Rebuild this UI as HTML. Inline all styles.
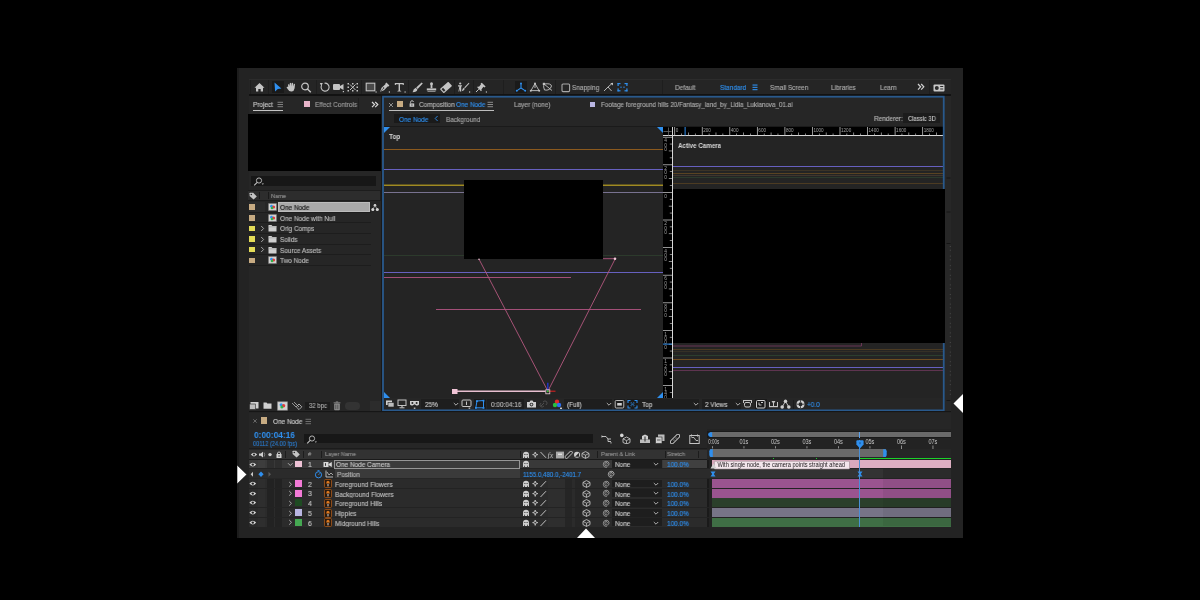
<!DOCTYPE html><html><head><meta charset="utf-8"><style>
html,body{margin:0;padding:0;background:#000;width:1200px;height:600px;overflow:hidden}
body>div,body>svg{position:absolute}
body>svg{will-change:transform}
.t{font-family:"Liberation Sans",sans-serif;white-space:nowrap;line-height:1;letter-spacing:0;-webkit-text-stroke:0.15px currentColor;transform:scaleX(0.92);transform-origin:0 0;will-change:transform}
</style></head><body>
<div style="left:237px;top:68px;width:726px;height:470px;background:#232323;"></div>
<div style="left:237px;top:68px;width:2px;height:470px;background:#1c1c1c;"></div>
<div style="left:249px;top:79px;width:702px;height:16px;background:#2c2c2c;"></div>
<div style="left:249px;top:80px;width:702px;height:14px;background:#252525;"></div>
<div style="left:249px;top:94px;width:702px;height:1.8px;background:#121212;"></div>
<div style="left:250px;top:80px;width:1px;height:14px;background:#1e1e1e;"></div>
<div style="left:268px;top:80px;width:1px;height:14px;background:#1e1e1e;"></div>
<div style="left:315.5px;top:80px;width:1px;height:14px;background:#1e1e1e;"></div>
<div style="left:361px;top:80px;width:1px;height:14px;background:#1e1e1e;"></div>
<div style="left:408px;top:80px;width:1px;height:14px;background:#1e1e1e;"></div>
<div style="left:454px;top:80px;width:1px;height:14px;background:#1e1e1e;"></div>
<div style="left:473px;top:80px;width:1px;height:14px;background:#1e1e1e;"></div>
<div style="left:503px;top:80px;width:1px;height:14px;background:#1e1e1e;"></div>
<div style="left:555px;top:80px;width:1px;height:14px;background:#1e1e1e;"></div>
<div style="left:662px;top:80px;width:1px;height:14px;background:#1e1e1e;"></div>
<div style="left:929px;top:80px;width:1px;height:14px;background:#1e1e1e;"></div>
<svg style="left:254px;top:82px;" width="11" height="10" viewBox="0 0 11 10"><path d="M5.5 1 L0.5 5.8 L2 5.8 L2 9.5 L4.3 9.5 L4.3 7 L6.7 7 L6.7 9.5 L9 9.5 L9 5.8 L10.5 5.8 Z" fill="#c4c4c4"/></svg>
<div style="left:272px;top:81px;width:11.6px;height:11.7px;background:#1a1a1a;"></div>
<svg style="left:273px;top:82px;" width="10" height="10" viewBox="0 0 10 10"><path d="M1.5 0.4 L8.4 6.6 L4.8 7 L2.1 9.6 Z" fill="#2f8fee"/></svg>
<svg style="left:286px;top:82px;" width="11" height="10" viewBox="0 0 11 10"><path d="M2.2 5 L2 2.6 Q2.6 1.8 3.3 2.6 L3.6 4.6 L3.8 1.2 Q4.5 0.4 5.2 1.2 L5.3 4.4 L5.8 1 Q6.5 0.3 7.1 1.2 L7 4.6 L7.8 2 Q8.5 1.5 9 2.3 L8.6 6.2 Q8.2 9 5.6 9.6 Q3 9.8 2 7.5 L0.6 5.4 Q0.8 4.4 1.7 4.8 Z" fill="#c4c4c4"/></svg>
<svg style="left:300px;top:82px;" width="12" height="11" viewBox="0 0 12 11"><circle cx="5" cy="4.5" r="3.3" fill="none" stroke="#c4c4c4" stroke-width="1.2"/><path d="M7.4 7 L10.8 10.2" stroke="#c4c4c4" stroke-width="1.4"/></svg>
<svg style="left:319px;top:82px;" width="12" height="11" viewBox="0 0 12 11"><path d="M2.6 3.2 A4 4 0 1 0 5.5 1.2" fill="none" stroke="#c4c4c4" stroke-width="1.1"/><path d="M0.8 1 L3.8 1 L2.3 4 Z" fill="#c4c4c4"/></svg>
<svg style="left:332px;top:82px;" width="13" height="11" viewBox="0 0 13 11"><rect x="1" y="2" width="7" height="6" rx="1" fill="#c4c4c4"/><path d="M8 4 L11.5 2 L11.5 8 L8 6Z" fill="#c4c4c4"/><rect x="10.8" y="9" width="1.2" height="1.2" fill="#c4c4c4"/></svg>
<svg style="left:347px;top:82px;" width="12" height="11" viewBox="0 0 12 11"><g fill="#c4c4c4"><rect x="0.5" y="1" width="1.5" height="1.5"/><rect x="9.5" y="1" width="1.5" height="1.5"/><rect x="0.5" y="8" width="1.5" height="1.5"/><rect x="9.5" y="8" width="1.5" height="1.5"/><rect x="0.5" y="4.5" width="1.5" height="1.5"/><rect x="9.5" y="4.5" width="1.5" height="1.5"/><rect x="5" y="1" width="1.5" height="1.5"/><rect x="5" y="8" width="1.5" height="1.5"/><path d="M3 2.5 L8.5 8 M8.5 2.5 L3 8" stroke="#c4c4c4" stroke-width="1"/></g></svg>
<svg style="left:365px;top:82px;" width="13" height="11" viewBox="0 0 13 11"><rect x="1.2" y="1.2" width="8.6" height="7.6" fill="#4a4a4a" stroke="#c4c4c4" stroke-width="1.1"/><rect x="10.5" y="9.4" width="1.2" height="1.2" fill="#c4c4c4"/></svg>
<svg style="left:379px;top:82px;" width="12" height="11" viewBox="0 0 12 11"><path d="M7.4 0.6 L10.4 3.6 L9.4 4.6 L8.6 4.4 L5 8.2 L1 9.8 L2.6 5.8 L6.4 2.2 L6.4 1.6 Z" fill="#c4c4c4"/><path d="M1.4 9.4 L4.4 6.4" stroke="#2a2a2a" stroke-width="0.7"/><circle cx="4.6" cy="6" r="0.7" fill="#2a2a2a"/><rect x="9.8" y="9.4" width="1.2" height="1.2" fill="#c4c4c4"/></svg>
<svg style="left:394px;top:82px;" width="12" height="11" viewBox="0 0 12 11"><path d="M0.8 1 L9.8 1 L9.8 3 L8.8 3 L8.6 2.2 L6 2.2 L6 8.5 L7.2 9 L7.2 9.6 L3.4 9.6 L3.4 9 L4.6 8.5 L4.6 2.2 L2 2.2 L1.8 3 L0.8 3 Z" fill="#c4c4c4"/><rect x="10.5" y="9.4" width="1.2" height="1.2" fill="#c4c4c4"/></svg>
<svg style="left:412px;top:82px;" width="11" height="11" viewBox="0 0 11 11"><path d="M9.6 0.4 L10.8 1.6 L5.6 7 L4.2 5.6 Z" fill="#c4c4c4"/><path d="M3.8 5.8 L5.4 7.4 Q5 10 0.6 10.2 Q1.4 6.6 3.8 5.8Z" fill="#c4c4c4"/></svg>
<svg style="left:426px;top:82px;" width="11" height="11" viewBox="0 0 11 11"><circle cx="5.5" cy="1.8" r="1.5" fill="#c4c4c4"/><rect x="4.6" y="2.8" width="1.8" height="3.5" fill="#c4c4c4"/><path d="M0.8 6.4 L10.2 6.4 L10.2 8.4 L0.8 8.4Z" fill="#c4c4c4"/><rect x="1.5" y="9" width="8" height="1" fill="#8a8a8a"/></svg>
<svg style="left:440px;top:82px;" width="12" height="11" viewBox="0 0 12 11"><g transform="rotate(-42 6 5.5)"><rect x="0.4" y="2.6" width="11.2" height="5.8" rx="0.8" fill="#c4c4c4"/><rect x="1.6" y="3.8" width="2" height="3.4" fill="#2a2a2a"/></g></svg>
<svg style="left:457px;top:82px;" width="14" height="11" viewBox="0 0 14 11"><circle cx="3.2" cy="1.5" r="1.1" fill="#c4c4c4"/><path d="M1 3.3 L5.2 3.3 L4.2 5 L4.2 9.6 L3 9.6 L3 6.5 L2.2 9.6 L1.4 9.6 L2.4 4.6 L1 4.6Z" fill="#c4c4c4"/><path d="M11.8 0.8 L12.4 1.4 L8 6.2 L7.2 5.4 Z" fill="#c4c4c4"/><path d="M6.8 5.8 L7.8 6.8 Q7.4 8.8 4.8 9.2 Q5.4 6.6 6.8 5.8Z" fill="#c4c4c4"/><rect x="12" y="9.4" width="1.2" height="1.2" fill="#c4c4c4"/></svg>
<svg style="left:475px;top:82px;" width="13" height="11" viewBox="0 0 13 11"><path d="M6.8 0.8 L10.6 4.6 L9.6 5.4 L8.4 4.8 L6.4 7.4 L6.8 8.6 L6 9.2 L2.2 5.2 L2.8 4.4 L4 4.8 L6 2.2 L5.6 1.4Z" fill="#c4c4c4"/><path d="M3.8 7.2 L1 10" stroke="#c4c4c4" stroke-width="1"/><rect x="10.8" y="9.4" width="1.2" height="1.2" fill="#c4c4c4"/></svg>
<div style="left:515px;top:81px;width:11.5px;height:12px;background:#1a1a1a;"></div>
<svg style="left:515px;top:82px;" width="12" height="11" viewBox="0 0 12 11"><path d="M6 1.5 L6 6 L2 8.6 M6 6 L10 8.6" stroke="#2f8fee" stroke-width="1.1" fill="none"/><circle cx="6" cy="1.6" r="1" fill="#2f8fee"/><circle cx="1.8" cy="8.7" r="1" fill="#2f8fee"/><circle cx="10.2" cy="8.7" r="1" fill="#2f8fee"/></svg>
<svg style="left:529px;top:82px;" width="12" height="11" viewBox="0 0 12 11"><path d="M6 1.5 L2 8.6 L10 8.6 Z M6 1.5 L6 6" stroke="#c4c4c4" stroke-width="0.9" fill="none"/><circle cx="6" cy="1.6" r="1" fill="#c4c4c4"/><circle cx="1.8" cy="8.7" r="1" fill="#c4c4c4"/><circle cx="10.2" cy="8.7" r="1" fill="#c4c4c4"/></svg>
<svg style="left:542px;top:82px;" width="12" height="11" viewBox="0 0 12 11"><path d="M2 2 L10 8.5 M2 2 Q9 1 9.5 4 Q8 9 2.5 8 Q1 5 2 2" stroke="#c4c4c4" stroke-width="0.9" fill="none"/><rect x="0.8" y="0.8" width="2.2" height="2.2" fill="#c4c4c4"/></svg>
<svg style="left:561px;top:83px;" width="10" height="10" viewBox="0 0 10 10"><rect x="1" y="1" width="7.6" height="7.6" rx="1" fill="none" stroke="#a8a8a8" stroke-width="1.1"/></svg>
<div class="t" style="left:572px;top:84px;font-size:7px;color:#a9a9a9;">Snapping</div>
<svg style="left:603px;top:82px;" width="11" height="11" viewBox="0 0 11 11"><path d="M1 9 L5 5 L8.6 9 M5 5 L9.4 1.2" stroke="#c4c4c4" stroke-width="0.9" fill="none"/><path d="M7.2 1 L10 1 L10 3.6Z" fill="#c4c4c4"/></svg>
<svg style="left:617px;top:82px;" width="11" height="11" viewBox="0 0 11 11"><g fill="#2f8fee"><rect x="0.5" y="1" width="3" height="1.2"/><rect x="0.5" y="1" width="1.2" height="3"/><rect x="7.5" y="1" width="3" height="1.2"/><rect x="9.3" y="1" width="1.2" height="3"/><rect x="0.5" y="8.2" width="3" height="1.2"/><rect x="0.5" y="6.4" width="1.2" height="3"/><rect x="7.5" y="8.2" width="3" height="1.2"/><rect x="9.3" y="6.4" width="1.2" height="3"/><rect x="3.4" y="4.6" width="1.2" height="1.2"/><rect x="6.4" y="4.6" width="1.2" height="1.2"/></g></svg>
<div class="t" style="left:675px;top:84px;font-size:7px;color:#a9a9a9;">Default</div>
<div class="t" style="left:720px;top:84px;font-size:7px;color:#2f8fee;">Standard</div>
<svg style="left:752px;top:84px;" width="6" height="7" viewBox="0 0 6 7"><g fill="#2f8fee"><rect x="0.5" y="0.5" width="5" height="1.1"/><rect x="0.5" y="2.8" width="5" height="1.1"/><rect x="0.5" y="5.1" width="5" height="1.1"/></g></svg>
<div class="t" style="left:770px;top:84px;font-size:7px;color:#a9a9a9;">Small Screen</div>
<div class="t" style="left:831px;top:84px;font-size:7px;color:#a9a9a9;">Libraries</div>
<div class="t" style="left:880px;top:84px;font-size:7px;color:#a9a9a9;">Learn</div>
<svg style="left:917px;top:83px;" width="8" height="8" viewBox="0 0 8 8"><path d="M1 1 L3.6 3.8 L1 6.6 M4.2 1 L6.8 3.8 L4.2 6.6" stroke="#d0d0d0" stroke-width="1.2" fill="none"/></svg>
<svg style="left:933px;top:84px;" width="12" height="8" viewBox="0 0 12 8"><rect x="0.5" y="0.5" width="11" height="7" rx="1" fill="#c8c8c8"/><circle cx="3.8" cy="4" r="2" fill="#2a2a2a"/><rect x="7.2" y="2" width="3" height="1" fill="#2a2a2a"/><rect x="7.2" y="4.5" width="3" height="1" fill="#2a2a2a"/></svg>
<div style="left:249px;top:96px;width:132px;height:316px;background:#262626;"></div>
<div style="left:380.5px;top:96px;width:1.5px;height:316px;background:#181818;"></div>
<div class="t" style="left:252.5px;top:101px;font-size:7px;color:#c9c9c9;">Project</div>
<svg style="left:277px;top:101px;" width="7" height="7" viewBox="0 0 7 7"><g fill="#808080"><rect x="0.5" y="0.8" width="5.5" height="1"/><rect x="0.5" y="3" width="5.5" height="1"/><rect x="0.5" y="5.2" width="5.5" height="1"/></g></svg>
<div style="left:252.5px;top:110px;width:30.5px;height:1.1px;background:#c4c4c4;"></div>
<div style="left:303.8px;top:101.4px;width:6px;height:5.8px;background:#e6b3c8;"></div>
<div class="t" style="left:315px;top:101px;font-size:7px;color:#9c9c9c;">Effect Controls</div>
<div style="left:358px;top:98px;width:1px;height:12px;background:#1e1e1e;"></div>
<svg style="left:371px;top:101px;" width="8" height="8" viewBox="0 0 8 8"><path d="M1 1 L3.6 3.6 L1 6.2 M4.2 1 L6.8 3.6 L4.2 6.2" stroke="#d8d8d8" stroke-width="1.2" fill="none"/></svg>
<div style="left:247.5px;top:114px;width:133px;height:57px;background:#000;"></div>
<div style="left:251px;top:176px;width:125px;height:10px;background:#171717;"></div>
<svg style="left:253px;top:177px;" width="12" height="9" viewBox="0 0 12 9"><circle cx="6" cy="3.5" r="2.6" fill="none" stroke="#c4c4c4" stroke-width="0.9"/><path d="M4.2 5.4 L1.2 8.4" stroke="#c4c4c4" stroke-width="1.1"/><path d="M8.6 6.4 L11 6.4 L9.8 7.8Z" fill="#c4c4c4"/></svg>
<div style="left:247.5px;top:190px;width:133px;height:11px;background:#1d1d1d;"></div>
<div style="left:248px;top:191.3px;width:132px;height:9px;background:#2d2d2d;"></div>
<svg style="left:249px;top:192px;" width="9" height="8" viewBox="0 0 9 8"><path d="M0.6 1.2 L0.6 4 L4.6 7.6 L7.8 4.4 L4.2 0.8 L1 0.8Z" fill="#c4c4c4"/><circle cx="2.3" cy="2.5" r="0.8" fill="#282828"/></svg>
<div style="left:258.5px;top:192px;width:0.8px;height:7px;background:#1a1a1a;"></div>
<div style="left:267.5px;top:192px;width:0.8px;height:7px;background:#1a1a1a;"></div>
<div class="t" style="left:271px;top:193px;font-size:6.2px;color:#8e8e8e;">Name</div>
<div style="left:249px;top:201.6px;width:16px;height:10.4px;background:#2b2b2b;"></div>
<div style="left:249px;top:211.79999999999998px;width:122px;height:0.8px;background:#1d1d1d;"></div>
<div style="left:249.2px;top:204.29999999999998px;width:5.6px;height:5.6px;background:#c7ab82;"></div>
<svg style="left:267.5px;top:202.9px;" width="9" height="8" viewBox="0 0 9 8"><rect x="0.3" y="0.3" width="8.4" height="7.4" fill="#9c9c9c"/><rect x="1" y="1" width="7" height="6" fill="#d2d2d2"/><circle cx="3.5" cy="3.2" r="1.4" fill="#2f8fee"/><circle cx="5.6" cy="4.1" r="1.5" fill="#e03b3b"/><circle cx="4" cy="5" r="1.3" fill="#33b24a"/></svg>
<div style="left:278px;top:201.9px;width:92px;height:10px;background:#a9a9a9;box-sizing:border-box;border:1px solid #bcbcbc;"></div>
<div class="t" style="left:279.5px;top:204px;font-size:7px;color:#161616;">One Node</div>
<svg style="left:371px;top:202.6px;" width="9" height="9" viewBox="0 0 9 9"><g fill="#dcdcdc"><circle cx="4" cy="2.2" r="1.3"/><circle cx="1.8" cy="6.6" r="1.5"/><circle cx="6.3" cy="6.6" r="1.5"/></g><path d="M4 2.2 L1.8 6.6 M4 2.2 L6.3 6.6" stroke="#bdbdbd" stroke-width="0.7"/></svg>
<div style="left:249px;top:222.45px;width:122px;height:0.8px;background:#1d1d1d;"></div>
<div style="left:249.2px;top:214.95px;width:5.6px;height:5.6px;background:#c7ab82;"></div>
<svg style="left:267.5px;top:213.55px;" width="9" height="8" viewBox="0 0 9 8"><rect x="0.3" y="0.3" width="8.4" height="7.4" fill="#9c9c9c"/><rect x="1" y="1" width="7" height="6" fill="#d2d2d2"/><circle cx="3.5" cy="3.2" r="1.4" fill="#2f8fee"/><circle cx="5.6" cy="4.1" r="1.5" fill="#e03b3b"/><circle cx="4" cy="5" r="1.3" fill="#33b24a"/></svg>
<div class="t" style="left:279.5px;top:215px;font-size:7px;color:#bababa;">One Node with Null</div>
<div style="left:249px;top:233.1px;width:122px;height:0.8px;background:#1d1d1d;"></div>
<div style="left:249.2px;top:225.6px;width:5.6px;height:5.6px;background:#e4dc58;"></div>
<svg style="left:260px;top:224.9px;" width="5" height="7" viewBox="0 0 5 7"><path d="M1.2 1 L3.6 3.5 L1.2 6" stroke="#b0b0b0" stroke-width="0.9" fill="none"/></svg>
<svg style="left:267.5px;top:224.20000000000002px;" width="9" height="8" viewBox="0 0 9 8"><path d="M0.5 1 L3.5 1 L4.4 2 L8.5 2 L8.5 7.5 L0.5 7.5Z" fill="#cfcfcf"/><rect x="0.5" y="2.6" width="8" height="0.6" fill="#9a9a9a"/></svg>
<div class="t" style="left:279.5px;top:225px;font-size:7px;color:#bababa;">Orig Comps</div>
<div style="left:249px;top:243.75px;width:122px;height:0.8px;background:#1d1d1d;"></div>
<div style="left:249.2px;top:236.25px;width:5.6px;height:5.6px;background:#e4dc58;"></div>
<svg style="left:260px;top:235.55px;" width="5" height="7" viewBox="0 0 5 7"><path d="M1.2 1 L3.6 3.5 L1.2 6" stroke="#b0b0b0" stroke-width="0.9" fill="none"/></svg>
<svg style="left:267.5px;top:234.85000000000002px;" width="9" height="8" viewBox="0 0 9 8"><path d="M0.5 1 L3.5 1 L4.4 2 L8.5 2 L8.5 7.5 L0.5 7.5Z" fill="#cfcfcf"/><rect x="0.5" y="2.6" width="8" height="0.6" fill="#9a9a9a"/></svg>
<div class="t" style="left:279.5px;top:236px;font-size:7px;color:#bababa;">Solids</div>
<div style="left:249px;top:254.39999999999998px;width:122px;height:0.8px;background:#1d1d1d;"></div>
<div style="left:249.2px;top:246.89999999999998px;width:5.6px;height:5.6px;background:#e4dc58;"></div>
<svg style="left:260px;top:246.2px;" width="5" height="7" viewBox="0 0 5 7"><path d="M1.2 1 L3.6 3.5 L1.2 6" stroke="#b0b0b0" stroke-width="0.9" fill="none"/></svg>
<svg style="left:267.5px;top:245.5px;" width="9" height="8" viewBox="0 0 9 8"><path d="M0.5 1 L3.5 1 L4.4 2 L8.5 2 L8.5 7.5 L0.5 7.5Z" fill="#cfcfcf"/><rect x="0.5" y="2.6" width="8" height="0.6" fill="#9a9a9a"/></svg>
<div class="t" style="left:279.5px;top:247px;font-size:7px;color:#bababa;">Source Assets</div>
<div style="left:249px;top:265.05px;width:122px;height:0.8px;background:#1d1d1d;"></div>
<div style="left:249.2px;top:257.55px;width:5.6px;height:5.6px;background:#c7ab82;"></div>
<svg style="left:267.5px;top:256.15px;" width="9" height="8" viewBox="0 0 9 8"><rect x="0.3" y="0.3" width="8.4" height="7.4" fill="#9c9c9c"/><rect x="1" y="1" width="7" height="6" fill="#d2d2d2"/><circle cx="3.5" cy="3.2" r="1.4" fill="#2f8fee"/><circle cx="5.6" cy="4.1" r="1.5" fill="#e03b3b"/><circle cx="4" cy="5" r="1.3" fill="#33b24a"/></svg>
<div class="t" style="left:279.5px;top:257px;font-size:7px;color:#bababa;">Two Node</div>
<div style="left:249px;top:400px;width:132px;height:11.3px;background:#262626;"></div>
<div style="left:249px;top:411.3px;width:132px;height:1px;background:#161616;"></div>
<svg style="left:249px;top:401px;" width="11" height="10" viewBox="0 0 11 10"><rect x="1.5" y="1" width="8" height="6.5" fill="#d0d0d0"/><rect x="0.5" y="3" width="6" height="5.5" fill="#bdbdbd" stroke="#262626" stroke-width="0.6"/></svg>
<svg style="left:263px;top:401px;" width="9" height="9" viewBox="0 0 9 9"><path d="M0.5 1.5 L3.5 1.5 L4.3 2.4 L8.5 2.4 L8.5 7.8 L0.5 7.8Z" fill="#d0d0d0"/></svg>
<svg style="left:276.5px;top:401px;" width="11" height="10" viewBox="0 0 11 10"><rect x="0.3" y="0.5" width="10.4" height="9" fill="#a8a8a8"/><rect x="1" y="1.2" width="9" height="7.6" fill="#d2d2d2"/><circle cx="4.2" cy="3.8" r="1.6" fill="#2f8fee"/><circle cx="6.6" cy="4.8" r="1.7" fill="#e03b3b"/><circle cx="4.8" cy="6" r="1.5" fill="#33b24a"/></svg>
<svg style="left:291px;top:401px;" width="12" height="10" viewBox="0 0 12 10"><path d="M1 2 L5 6 M3 1 L8 6" stroke="#a0a0a0" stroke-width="0.9"/><path d="M8 3 L10.8 5.8 L8 8.6 L5.2 5.8Z" fill="none" stroke="#b8b8b8" stroke-width="0.9"/></svg>
<div style="left:305px;top:401.5px;width:24.5px;height:8.5px;background:#1c1c1c;"></div>
<div class="t" style="left:309px;top:403px;font-size:6.5px;color:#a9a9a9;">32 bpc</div>
<svg style="left:332.5px;top:401px;" width="8" height="10" viewBox="0 0 8 10"><rect x="1.2" y="2.6" width="5.6" height="6.6" rx="0.8" fill="#8e8e8e"/><rect x="0.6" y="1.4" width="6.8" height="0.9" fill="#8e8e8e"/><rect x="2.8" y="0.5" width="2.4" height="0.9" fill="#8e8e8e"/><rect x="2.6" y="3.6" width="0.6" height="4.6" fill="#262626"/><rect x="4.6" y="3.6" width="0.6" height="4.6" fill="#262626"/></svg>
<div style="left:344.5px;top:401.5px;width:15px;height:8.5px;background:#333333;border-radius:4px;"></div>
<div style="left:369.5px;top:400.5px;width:11px;height:10.5px;background:#2c2c2c;"></div>
<div style="left:382px;top:96px;width:562px;height:315px;background:#262626;"></div>
<svg style="left:388px;top:102px;" width="6" height="6" viewBox="0 0 6 6"><path d="M1 1 L5 5 M5 1 L1 5" stroke="#9a9a9a" stroke-width="0.9"/></svg>
<div style="left:397px;top:101px;width:6.3px;height:6.3px;background:#c7ab82;"></div>
<svg style="left:408.5px;top:100px;" width="6" height="8" viewBox="0 0 6 8"><path d="M1.6 3.4 L1.6 2.2 Q1.6 0.7 3 0.7 Q4.4 0.7 4.4 2" stroke="#c8c8c8" stroke-width="0.9" fill="none"/><rect x="0.6" y="3.4" width="4.6" height="3.4" fill="#c8c8c8"/><rect x="2.5" y="4.4" width="0.9" height="1.3" fill="#262626"/></svg>
<div class="t" style="left:419px;top:101px;font-size:7px;color:#b2b2b2;">Composition</div>
<div class="t" style="left:456px;top:101px;font-size:7px;color:#2f8fee;">One Node</div>
<svg style="left:487px;top:101px;" width="7" height="7" viewBox="0 0 7 7"><g fill="#8a8a8a"><rect x="0.5" y="0.8" width="5.5" height="1"/><rect x="0.5" y="3" width="5.5" height="1"/><rect x="0.5" y="5.2" width="5.5" height="1"/></g></svg>
<div style="left:389px;top:110.3px;width:105px;height:1.1px;background:#bdbdbd;"></div>
<div class="t" style="left:514px;top:101px;font-size:7px;color:#a6a6a6;">Layer (none)</div>
<div style="left:589.5px;top:101.5px;width:5.8px;height:5.8px;background:#b9b6e2;"></div>
<div class="t" style="left:601px;top:101px;font-size:7px;color:#aaaaaa;transform:scaleX(0.895)">Footage foreground hills 20/Fantasy_land_by_Lidia_Lukianova_01.ai</div>
<div style="left:394px;top:113.5px;width:45.5px;height:9.5px;background:#1a1a1a;"></div>
<div class="t" style="left:399px;top:116px;font-size:7px;color:#2f8fee;">One Node</div>
<svg style="left:434px;top:115px;" width="5" height="7" viewBox="0 0 5 7"><path d="M3.6 1 L1.2 3.5 L3.6 6" stroke="#2f8fee" stroke-width="0.9" fill="none"/></svg>
<div class="t" style="left:446px;top:116px;font-size:7px;color:#a3a3a3;">Background</div>
<div class="t" style="left:874px;top:115px;font-size:7px;color:#b8b8b8;">Renderer:</div>
<div style="left:903px;top:113.4px;width:37px;height:9.6px;background:#1c1c1c;"></div>
<div class="t" style="left:908px;top:115px;font-size:7px;color:#c2c2c2;transform:scaleX(0.83)">Classic 3D</div>
<div style="left:384px;top:126.2px;width:560px;height:1px;background:#1a1a1a;"></div>
<div style="left:384px;top:127px;width:279px;height:271px;background:#242424;"></div>
<div style="left:384px;top:149.2px;width:279px;height:1px;background:#8c5a1e;"></div>
<div style="left:384px;top:169.2px;width:279px;height:1.2px;background:#6660bf;"></div>
<div style="left:384px;top:184px;width:279px;height:1px;background:#5e5420;"></div>
<div style="left:384px;top:185px;width:279px;height:1px;background:#a08a22;"></div>
<div style="left:384px;top:191.8px;width:279px;height:1px;background:#787290;"></div>
<div style="left:384px;top:255px;width:279px;height:0.8px;background:#2c3a2c;"></div>
<div style="left:384px;top:272px;width:279px;height:1.2px;background:#6660bf;"></div>
<div style="left:384px;top:277px;width:187px;height:1px;background:#a34f78;"></div>
<div style="left:435.5px;top:309px;width:205.5px;height:1px;background:#a34f78;"></div>
<div style="left:464px;top:179.5px;width:139px;height:79.2px;background:#000;"></div>
<svg style="left:384px;top:127px;" width="279" height="271" viewBox="0 0 279 271"><path d="M95 132.2 L163.9 264.2 L231.1 132" stroke="#b4587f" stroke-width="0.9" fill="none"/><path d="M219 131.7 L231 131.7" stroke="#a35277" stroke-width="1"/><circle cx="231" cy="131.7" r="1.3" fill="#f0c8d8"/><circle cx="95" cy="132.2" r="0.8" fill="#e8c0d0"/><path d="M73 264.3 L161.5 264.3" stroke="#e8bfd0" stroke-width="1.6"/><rect x="68" y="262" width="5.5" height="5" fill="#f0c4d6"/><path d="M163.8 264.2 L163.8 255.8" stroke="#2233cc" stroke-width="1.4"/><path d="M163.8 264.2 L171.5 264.2" stroke="#d02020" stroke-width="1.1"/><rect x="161.8" y="262.8" width="4" height="4" fill="none" stroke="#e8d0d8" stroke-width="0.8"/><circle cx="163.8" cy="264.2" r="1" fill="#30c030"/></svg>
<svg style="left:384px;top:127px;" width="6" height="6" viewBox="0 0 6 6"><polygon points="0,0 6,0 0,6" fill="#2f8fee"/></svg>
<svg style="left:657px;top:127px;" width="6" height="6" viewBox="0 0 6 6"><polygon points="0,0 6,0 6,6" fill="#2f8fee"/></svg>
<svg style="left:384px;top:392px;" width="6" height="6" viewBox="0 0 6 6"><polygon points="0,0 6,6 0,6" fill="#2f8fee"/></svg>
<svg style="left:657px;top:392px;" width="6" height="6" viewBox="0 0 6 6"><polygon points="6,0 6,6 0,6" fill="#2f8fee"/></svg>
<div class="t" style="left:389.3px;top:133px;font-size:7px;color:#d8d8d8;font-weight:bold;-webkit-text-stroke:0">Top</div>
<div style="left:663px;top:127px;width:281px;height:8.5px;background:#000;"></div>
<div style="left:663px;top:127px;width:9.5px;height:271px;background:#000;"></div>
<div style="left:663px;top:135px;width:281px;height:1.2px;background:#d8d8d8;"></div>
<div style="left:672px;top:127px;width:1.2px;height:271px;background:#d8d8d8;"></div>
<svg style="left:673px;top:127px;" width="271" height="9" viewBox="0 0 271 9"><rect x="1.30" y="0" width="0.8" height="8.5" fill="#bdbdbd"/><text x="2.70" y="4.7" font-size="4.6" fill="#a0a0a0" font-family="Liberation Sans">0</text><rect x="8.19" y="6.5" width="0.7" height="2" fill="#bdbdbd"/><rect x="15.07" y="5.5" width="0.7" height="3" fill="#bdbdbd"/><rect x="21.96" y="6.5" width="0.7" height="2" fill="#bdbdbd"/><rect x="28.85" y="0" width="0.8" height="8.5" fill="#bdbdbd"/><text x="30.25" y="4.7" font-size="4.6" fill="#a0a0a0" font-family="Liberation Sans">200</text><rect x="35.74" y="6.5" width="0.7" height="2" fill="#bdbdbd"/><rect x="42.62" y="5.5" width="0.7" height="3" fill="#bdbdbd"/><rect x="49.51" y="6.5" width="0.7" height="2" fill="#bdbdbd"/><rect x="56.40" y="0" width="0.8" height="8.5" fill="#bdbdbd"/><text x="57.80" y="4.7" font-size="4.6" fill="#a0a0a0" font-family="Liberation Sans">400</text><rect x="63.29" y="6.5" width="0.7" height="2" fill="#bdbdbd"/><rect x="70.17" y="5.5" width="0.7" height="3" fill="#bdbdbd"/><rect x="77.06" y="6.5" width="0.7" height="2" fill="#bdbdbd"/><rect x="83.95" y="0" width="0.8" height="8.5" fill="#bdbdbd"/><text x="85.35" y="4.7" font-size="4.6" fill="#a0a0a0" font-family="Liberation Sans">600</text><rect x="90.84" y="6.5" width="0.7" height="2" fill="#bdbdbd"/><rect x="97.72" y="5.5" width="0.7" height="3" fill="#bdbdbd"/><rect x="104.61" y="6.5" width="0.7" height="2" fill="#bdbdbd"/><rect x="111.50" y="0" width="0.8" height="8.5" fill="#bdbdbd"/><text x="112.90" y="4.7" font-size="4.6" fill="#a0a0a0" font-family="Liberation Sans">800</text><rect x="118.39" y="6.5" width="0.7" height="2" fill="#bdbdbd"/><rect x="125.27" y="5.5" width="0.7" height="3" fill="#bdbdbd"/><rect x="132.16" y="6.5" width="0.7" height="2" fill="#bdbdbd"/><rect x="139.05" y="0" width="0.8" height="8.5" fill="#bdbdbd"/><text x="140.45" y="4.7" font-size="4.6" fill="#a0a0a0" font-family="Liberation Sans">1000</text><rect x="145.94" y="6.5" width="0.7" height="2" fill="#bdbdbd"/><rect x="152.82" y="5.5" width="0.7" height="3" fill="#bdbdbd"/><rect x="159.71" y="6.5" width="0.7" height="2" fill="#bdbdbd"/><rect x="166.60" y="0" width="0.8" height="8.5" fill="#bdbdbd"/><text x="168.00" y="4.7" font-size="4.6" fill="#a0a0a0" font-family="Liberation Sans">1200</text><rect x="173.49" y="6.5" width="0.7" height="2" fill="#bdbdbd"/><rect x="180.37" y="5.5" width="0.7" height="3" fill="#bdbdbd"/><rect x="187.26" y="6.5" width="0.7" height="2" fill="#bdbdbd"/><rect x="194.15" y="0" width="0.8" height="8.5" fill="#bdbdbd"/><text x="195.55" y="4.7" font-size="4.6" fill="#a0a0a0" font-family="Liberation Sans">1400</text><rect x="201.04" y="6.5" width="0.7" height="2" fill="#bdbdbd"/><rect x="207.92" y="5.5" width="0.7" height="3" fill="#bdbdbd"/><rect x="214.81" y="6.5" width="0.7" height="2" fill="#bdbdbd"/><rect x="221.70" y="0" width="0.8" height="8.5" fill="#bdbdbd"/><text x="223.10" y="4.7" font-size="4.6" fill="#a0a0a0" font-family="Liberation Sans">1600</text><rect x="228.59" y="6.5" width="0.7" height="2" fill="#bdbdbd"/><rect x="235.47" y="5.5" width="0.7" height="3" fill="#bdbdbd"/><rect x="242.36" y="6.5" width="0.7" height="2" fill="#bdbdbd"/><rect x="249.25" y="0" width="0.8" height="8.5" fill="#bdbdbd"/><text x="250.65" y="4.7" font-size="4.6" fill="#a0a0a0" font-family="Liberation Sans">1800</text><rect x="256.14" y="6.5" width="0.7" height="2" fill="#bdbdbd"/><rect x="263.02" y="5.5" width="0.7" height="3" fill="#bdbdbd"/><rect x="269.91" y="6.5" width="0.7" height="2" fill="#bdbdbd"/><rect x="11.6" y="0" width="1" height="8.5" fill="#2f8fee"/></svg>
<svg style="left:663px;top:127px;" width="9" height="9" viewBox="0 0 9 9"><rect x="0.5" y="4.2" width="8" height="0.8" fill="#6a6a6a"/><rect x="5.2" y="0.5" width="0.8" height="8" fill="#6a6a6a"/></svg>
<svg style="left:663px;top:136px;" width="9" height="262" viewBox="0 0 9 262"><rect x="0" y="0.80" width="9" height="0.8" fill="#bdbdbd"/><text x="1.3" y="6.40" font-size="4.8" fill="#a0a0a0" font-family="Liberation Sans">4</text><text x="1.3" y="10.70" font-size="4.8" fill="#a0a0a0" font-family="Liberation Sans">0</text><text x="1.3" y="15.00" font-size="4.8" fill="#a0a0a0" font-family="Liberation Sans">0</text><rect x="6.8" y="7.70" width="2.2" height="0.7" fill="#bdbdbd"/><rect x="5.8" y="14.60" width="3.2" height="0.7" fill="#bdbdbd"/><rect x="6.8" y="21.50" width="2.2" height="0.7" fill="#bdbdbd"/><rect x="0" y="28.40" width="9" height="0.8" fill="#bdbdbd"/><text x="1.3" y="34.00" font-size="4.8" fill="#a0a0a0" font-family="Liberation Sans">2</text><text x="1.3" y="38.30" font-size="4.8" fill="#a0a0a0" font-family="Liberation Sans">0</text><text x="1.3" y="42.60" font-size="4.8" fill="#a0a0a0" font-family="Liberation Sans">0</text><rect x="6.8" y="35.30" width="2.2" height="0.7" fill="#bdbdbd"/><rect x="5.8" y="42.20" width="3.2" height="0.7" fill="#bdbdbd"/><rect x="6.8" y="49.10" width="2.2" height="0.7" fill="#bdbdbd"/><rect x="0" y="56.00" width="9" height="0.8" fill="#bdbdbd"/><text x="1.3" y="61.60" font-size="4.8" fill="#a0a0a0" font-family="Liberation Sans">0</text><rect x="6.8" y="62.90" width="2.2" height="0.7" fill="#bdbdbd"/><rect x="5.8" y="69.80" width="3.2" height="0.7" fill="#bdbdbd"/><rect x="6.8" y="76.70" width="2.2" height="0.7" fill="#bdbdbd"/><rect x="0" y="83.60" width="9" height="0.8" fill="#bdbdbd"/><text x="1.3" y="89.20" font-size="4.8" fill="#a0a0a0" font-family="Liberation Sans">2</text><text x="1.3" y="93.50" font-size="4.8" fill="#a0a0a0" font-family="Liberation Sans">0</text><text x="1.3" y="97.80" font-size="4.8" fill="#a0a0a0" font-family="Liberation Sans">0</text><rect x="6.8" y="90.50" width="2.2" height="0.7" fill="#bdbdbd"/><rect x="5.8" y="97.40" width="3.2" height="0.7" fill="#bdbdbd"/><rect x="6.8" y="104.30" width="2.2" height="0.7" fill="#bdbdbd"/><rect x="0" y="111.20" width="9" height="0.8" fill="#bdbdbd"/><text x="1.3" y="116.80" font-size="4.8" fill="#a0a0a0" font-family="Liberation Sans">4</text><text x="1.3" y="121.10" font-size="4.8" fill="#a0a0a0" font-family="Liberation Sans">0</text><text x="1.3" y="125.40" font-size="4.8" fill="#a0a0a0" font-family="Liberation Sans">0</text><rect x="6.8" y="118.10" width="2.2" height="0.7" fill="#bdbdbd"/><rect x="5.8" y="125.00" width="3.2" height="0.7" fill="#bdbdbd"/><rect x="6.8" y="131.90" width="2.2" height="0.7" fill="#bdbdbd"/><rect x="0" y="138.80" width="9" height="0.8" fill="#bdbdbd"/><text x="1.3" y="144.40" font-size="4.8" fill="#a0a0a0" font-family="Liberation Sans">6</text><text x="1.3" y="148.70" font-size="4.8" fill="#a0a0a0" font-family="Liberation Sans">0</text><text x="1.3" y="153.00" font-size="4.8" fill="#a0a0a0" font-family="Liberation Sans">0</text><rect x="6.8" y="145.70" width="2.2" height="0.7" fill="#bdbdbd"/><rect x="5.8" y="152.60" width="3.2" height="0.7" fill="#bdbdbd"/><rect x="6.8" y="159.50" width="2.2" height="0.7" fill="#bdbdbd"/><rect x="0" y="166.40" width="9" height="0.8" fill="#bdbdbd"/><text x="1.3" y="172.00" font-size="4.8" fill="#a0a0a0" font-family="Liberation Sans">8</text><text x="1.3" y="176.30" font-size="4.8" fill="#a0a0a0" font-family="Liberation Sans">0</text><text x="1.3" y="180.60" font-size="4.8" fill="#a0a0a0" font-family="Liberation Sans">0</text><rect x="6.8" y="173.30" width="2.2" height="0.7" fill="#bdbdbd"/><rect x="5.8" y="180.20" width="3.2" height="0.7" fill="#bdbdbd"/><rect x="6.8" y="187.10" width="2.2" height="0.7" fill="#bdbdbd"/><rect x="0" y="194.00" width="9" height="0.8" fill="#bdbdbd"/><text x="1.3" y="199.60" font-size="4.8" fill="#a0a0a0" font-family="Liberation Sans">1</text><text x="1.3" y="203.90" font-size="4.8" fill="#a0a0a0" font-family="Liberation Sans">0</text><text x="1.3" y="208.20" font-size="4.8" fill="#a0a0a0" font-family="Liberation Sans">0</text><text x="1.3" y="212.50" font-size="4.8" fill="#a0a0a0" font-family="Liberation Sans">0</text><rect x="6.8" y="200.90" width="2.2" height="0.7" fill="#bdbdbd"/><rect x="5.8" y="207.80" width="3.2" height="0.7" fill="#bdbdbd"/><rect x="6.8" y="214.70" width="2.2" height="0.7" fill="#bdbdbd"/><rect x="0" y="221.60" width="9" height="0.8" fill="#bdbdbd"/><text x="1.3" y="227.20" font-size="4.8" fill="#a0a0a0" font-family="Liberation Sans">1</text><text x="1.3" y="231.50" font-size="4.8" fill="#a0a0a0" font-family="Liberation Sans">2</text><text x="1.3" y="235.80" font-size="4.8" fill="#a0a0a0" font-family="Liberation Sans">0</text><text x="1.3" y="240.10" font-size="4.8" fill="#a0a0a0" font-family="Liberation Sans">0</text><rect x="6.8" y="228.50" width="2.2" height="0.7" fill="#bdbdbd"/><rect x="5.8" y="235.40" width="3.2" height="0.7" fill="#bdbdbd"/><rect x="6.8" y="242.30" width="2.2" height="0.7" fill="#bdbdbd"/><rect x="0" y="249.20" width="9" height="0.8" fill="#bdbdbd"/><text x="1.3" y="254.80" font-size="4.8" fill="#a0a0a0" font-family="Liberation Sans">1</text><text x="1.3" y="259.10" font-size="4.8" fill="#a0a0a0" font-family="Liberation Sans">4</text><text x="1.3" y="263.40" font-size="4.8" fill="#a0a0a0" font-family="Liberation Sans">0</text><text x="1.3" y="267.70" font-size="4.8" fill="#a0a0a0" font-family="Liberation Sans">0</text><rect x="6.8" y="256.10" width="2.2" height="0.7" fill="#bdbdbd"/><rect x="5.8" y="263.00" width="3.2" height="0.7" fill="#bdbdbd"/><rect x="6.8" y="269.90" width="2.2" height="0.7" fill="#bdbdbd"/><rect x="0" y="207.6" width="10" height="1" fill="#2f8fee"/></svg>
<div style="left:673.2px;top:136.2px;width:270.8px;height:261.8px;background:#242424;"></div>
<div class="t" style="left:678px;top:142px;font-size:7px;color:#d8d8d8;font-weight:bold;-webkit-text-stroke:0;transform:scaleX(0.885)">Active Camera</div>
<div style="left:673.2px;top:166.2px;width:270.8px;height:1.2px;background:#6660bf;"></div>
<div style="left:673.2px;top:170px;width:270.8px;height:1px;background:#3c3326;"></div>
<div style="left:673.2px;top:172.8px;width:270.8px;height:1px;background:#5a4322;"></div>
<div style="left:673.2px;top:175.3px;width:270.8px;height:1px;background:#40362e;"></div>
<div style="left:673.2px;top:177.3px;width:270.8px;height:0.8px;background:#2c3a2c;"></div>
<div style="left:673.2px;top:182.8px;width:270.8px;height:1px;background:#4c3b22;"></div>
<div style="left:673.2px;top:189px;width:270.8px;height:153.5px;background:#000;"></div>
<div style="left:673.2px;top:349.2px;width:270.8px;height:1px;background:#4a3a22;"></div>
<div style="left:673.2px;top:351px;width:270.8px;height:0.8px;background:#353026;"></div>
<div style="left:673.2px;top:355.2px;width:270.8px;height:1px;background:#2c3e2e;"></div>
<div style="left:673.2px;top:359.2px;width:270.8px;height:1.2px;background:#6e4c20;"></div>
<div style="left:673.2px;top:367.2px;width:270.8px;height:1.2px;background:#6660bf;"></div>
<div style="left:673.2px;top:370.2px;width:270.8px;height:0.8px;background:#5e3450;"></div>
<svg style="left:673px;top:342px;" width="200" height="6" viewBox="0 0 200 6"><path d="M0 4 L188.5 4 L188.5 0.5" stroke="#7a3a62" stroke-width="0.8" fill="none"/></svg>
<div style="left:384px;top:397.5px;width:560px;height:12.5px;background:#262626;"></div>
<svg style="left:385px;top:399px;" width="10" height="10" viewBox="0 0 10 10"><rect x="1" y="1.5" width="6" height="4.5" fill="#cfcfcf"/><rect x="3" y="3.5" width="6" height="4.5" fill="#bdbdbd" stroke="#262626" stroke-width="0.6"/></svg>
<svg style="left:397px;top:399px;" width="10" height="10" viewBox="0 0 10 10"><rect x="1" y="1" width="8" height="5.5" fill="none" stroke="#c4c4c4" stroke-width="1"/><rect x="4.4" y="6.5" width="1.2" height="2" fill="#c4c4c4"/><rect x="2.5" y="8.3" width="5" height="1" fill="#c4c4c4"/></svg>
<svg style="left:409px;top:399px;" width="11" height="11" viewBox="0 0 11 11"><path d="M1 2 L10 2 L10 5.5 Q9 7 7.4 6.4 L5.5 5.2 L3.6 6.4 Q2 7 1 5.5 Z" fill="#cfcfcf"/><circle cx="3.4" cy="4" r="1" fill="#262626"/><circle cx="7.6" cy="4" r="1" fill="#262626"/><rect x="4.8" y="8.6" width="1.6" height="1.2" fill="#cfcfcf"/></svg>
<div style="left:421px;top:399px;width:38px;height:10px;background:#1e1e1e;"></div>
<div class="t" style="left:425px;top:401px;font-size:7px;color:#c6c6c6;">25%</div>
<svg style="left:452.5px;top:402px;" width="6" height="5" viewBox="0 0 6 5"><path d="M0.8 1 L3 3.2 L5.2 1" stroke="#bdbdbd" stroke-width="0.9" fill="none"/></svg>
<svg style="left:461px;top:399px;" width="11" height="11" viewBox="0 0 11 11"><rect x="1" y="1" width="9" height="6.5" rx="1" fill="none" stroke="#c4c4c4" stroke-width="1"/><rect x="5" y="2.5" width="1" height="3.5" fill="#c4c4c4"/><rect x="7.6" y="8.6" width="1.6" height="1.2" fill="#c4c4c4"/></svg>
<div style="left:474px;top:399px;width:11.5px;height:10.5px;background:#1a1a1a;"></div>
<svg style="left:474px;top:399px;" width="12" height="11" viewBox="0 0 12 11"><path d="M3 2 L9.5 1.5 L9.5 8.8 L1.8 8.8 Z" fill="none" stroke="#2f8fee" stroke-width="1"/><g fill="#2f8fee"><rect x="2" y="1.2" width="1.8" height="1.8"/><rect x="8.6" y="0.8" width="1.8" height="1.8"/><rect x="1" y="8" width="1.8" height="1.8"/><rect x="8.6" y="8" width="1.8" height="1.8"/></g></svg>
<div style="left:487px;top:399px;width:37px;height:10.5px;background:#1e1e1e;"></div>
<div class="t" style="left:491px;top:401px;font-size:7px;color:#b9b9b9;">0:00:04:16</div>
<svg style="left:526px;top:399px;" width="11" height="10" viewBox="0 0 11 10"><path d="M1 3 L3.5 3 L4.5 1.6 L6.5 1.6 L7.5 3 L10 3 L10 8.6 L1 8.6Z" fill="#cfcfcf"/><circle cx="5.5" cy="5.6" r="1.8" fill="#262626"/><circle cx="5.5" cy="5.6" r="1" fill="#cfcfcf"/></svg>
<svg style="left:539px;top:399px;" width="10" height="10" viewBox="0 0 10 10"><path d="M2 7 L5 4 M4 3 Q6 1 7.5 2.5 Q9 4 7 6 M5 7 Q3 9 1.5 7.5 Q0 6 2 4" stroke="#4e4e4e" stroke-width="1" fill="none"/></svg>
<svg style="left:552px;top:399px;" width="11" height="11" viewBox="0 0 11 11"><circle cx="5" cy="2.8" r="2.2" fill="#e02828"/><circle cx="3" cy="6" r="2.2" fill="#28c040"/><circle cx="7" cy="6" r="2.2" fill="#2f6ff0"/><rect x="8" y="8.6" width="2" height="1.4" fill="#cfcfcf"/></svg>
<div style="left:564px;top:399px;width:48px;height:10.5px;background:#1e1e1e;"></div>
<div class="t" style="left:567px;top:401px;font-size:7px;color:#c6c6c6;">(Full)</div>
<svg style="left:605.5px;top:402px;" width="6" height="5" viewBox="0 0 6 5"><path d="M0.8 1 L3 3.2 L5.2 1" stroke="#bdbdbd" stroke-width="0.9" fill="none"/></svg>
<div style="left:614px;top:398.8px;width:11px;height:11px;background:#1c1c1c;"></div>
<svg style="left:614px;top:399px;" width="11" height="11" viewBox="0 0 11 11"><rect x="1.2" y="1.5" width="8.6" height="7.5" rx="1" fill="none" stroke="#b8b8b8" stroke-width="1"/><rect x="3.2" y="4" width="4.6" height="2.6" fill="#cfcfcf"/></svg>
<div style="left:626.5px;top:399px;width:11px;height:10.5px;background:#1a1a1a;"></div>
<svg style="left:626.5px;top:399px;" width="11" height="11" viewBox="0 0 11 11"><path d="M1 4 L1 1.5 L3.5 1.5 M7.5 1.5 L10 1.5 L10 4 M10 6.5 L10 9 L7.5 9 M3.5 9 L1 9 L1 6.5" stroke="#2f8fee" stroke-width="1.1" fill="none"/><path d="M3.6 4 L4.6 3.6 M6.4 3.6 L7.4 4 M7.4 6.5 L6.4 6.9 M4.6 6.9 L3.6 6.5" stroke="#2f8fee" stroke-width="0.9" fill="none"/><rect x="4.2" y="4.4" width="2.6" height="1.8" fill="#2f8fee" opacity="0.6"/></svg>
<div style="left:638px;top:399px;width:61px;height:10.5px;background:#1e1e1e;"></div>
<div class="t" style="left:642px;top:401px;font-size:7px;color:#c6c6c6;">Top</div>
<svg style="left:692.5px;top:402px;" width="6" height="5" viewBox="0 0 6 5"><path d="M0.8 1 L3 3.2 L5.2 1" stroke="#bdbdbd" stroke-width="0.9" fill="none"/></svg>
<div style="left:702px;top:399px;width:38.5px;height:10.5px;background:#1e1e1e;"></div>
<div class="t" style="left:705px;top:401px;font-size:7px;color:#c6c6c6;">2 Views</div>
<svg style="left:734.5px;top:402px;" width="6" height="5" viewBox="0 0 6 5"><path d="M0.8 1 L3 3.2 L5.2 1" stroke="#bdbdbd" stroke-width="0.9" fill="none"/></svg>
<svg style="left:742px;top:399px;" width="11" height="11" viewBox="0 0 11 11"><rect x="1.5" y="1" width="8" height="1" fill="#c4c4c4"/><rect x="2.5" y="3.5" width="6" height="4.5" rx="1.5" fill="none" stroke="#c4c4c4" stroke-width="1"/><rect x="1" y="1" width="1" height="3" fill="#c4c4c4"/><rect x="9" y="1" width="1" height="3" fill="#c4c4c4"/></svg>
<div style="left:755px;top:399px;width:11.5px;height:10.5px;background:#1a1a1a;"></div>
<svg style="left:755px;top:399px;" width="12" height="11" viewBox="0 0 12 11"><rect x="1.5" y="1.5" width="8.5" height="7.5" rx="1" fill="none" stroke="#cfcfcf" stroke-width="1"/><path d="M4 3.5 L4 6 L6.5 6" stroke="#cfcfcf" stroke-width="0.9" fill="none"/><rect x="6" y="3" width="2" height="1" fill="#cfcfcf"/></svg>
<svg style="left:768px;top:399px;" width="11" height="11" viewBox="0 0 11 11"><rect x="1" y="7" width="9" height="1.2" fill="#c4c4c4"/><rect x="1" y="3" width="1" height="4" fill="#c4c4c4"/><rect x="9" y="3" width="1" height="4" fill="#c4c4c4"/><path d="M3.5 2 L7.5 2 L5.5 5Z" fill="#c4c4c4"/><rect x="5" y="4" width="1" height="3" fill="#c4c4c4"/></svg>
<svg style="left:780px;top:399px;" width="11" height="11" viewBox="0 0 11 11"><circle cx="5.5" cy="2.2" r="1.7" fill="#cfcfcf"/><circle cx="2.2" cy="8" r="1.8" fill="#cfcfcf"/><circle cx="8.8" cy="8" r="1.8" fill="#cfcfcf"/><path d="M5.5 2.2 L2.2 8 M5.5 2.2 L8.8 8" stroke="#cfcfcf" stroke-width="0.9"/></svg>
<div style="left:793px;top:399.5px;width:0.8px;height:9.5px;background:#1c1c1c;"></div>
<svg style="left:795px;top:399px;" width="11" height="11" viewBox="0 0 11 11"><circle cx="5.5" cy="5.2" r="4" fill="#cfcfcf"/><circle cx="5.5" cy="5.2" r="2" fill="#262626"/><path d="M5.5 1.2 L5.5 3.2 M9.5 5.2 L7.5 5.2 M5.5 9.2 L5.5 7.2 M1.5 5.2 L3.5 5.2" stroke="#262626" stroke-width="0.8"/></svg>
<div class="t" style="left:807px;top:401px;font-size:7px;color:#2f8fee;">+0.0</div>
<svg style="left:381px;top:95px;" width="565" height="317" viewBox="0 0 565 317"><rect x="2" y="1.7" width="560.75" height="313.7" fill="none" stroke="#29598c" stroke-width="1.8"/></svg>
<div style="left:673.2px;top:189px;width:271.8px;height:153.5px;background:#000;"></div>
<div style="left:945px;top:96px;width:6px;height:316px;background:#272727;"></div>
<svg style="left:944px;top:100px;" width="8" height="312" viewBox="0 0 8 312"><rect x="5.8" y="146.0" width="1" height="1" fill="#4a4a4a"/><rect x="5.8" y="149.7" width="1" height="1" fill="#4a4a4a"/><rect x="5.8" y="155.6" width="1" height="1" fill="#4a4a4a"/><rect x="5.8" y="159.3" width="1" height="1" fill="#4a4a4a"/><rect x="5.8" y="165.2" width="1" height="1" fill="#4a4a4a"/><rect x="5.8" y="168.9" width="1" height="1" fill="#4a4a4a"/><rect x="5.8" y="174.8" width="1" height="1" fill="#4a4a4a"/><rect x="5.8" y="178.5" width="1" height="1" fill="#4a4a4a"/><rect x="5.8" y="184.4" width="1" height="1" fill="#4a4a4a"/><rect x="5.8" y="188.1" width="1" height="1" fill="#4a4a4a"/><rect x="5.8" y="194.0" width="1" height="1" fill="#4a4a4a"/><rect x="5.8" y="197.7" width="1" height="1" fill="#4a4a4a"/><rect x="5.8" y="203.6" width="1" height="1" fill="#4a4a4a"/><rect x="5.8" y="207.3" width="1" height="1" fill="#4a4a4a"/><rect x="5.8" y="213.2" width="1" height="1" fill="#4a4a4a"/><rect x="5.8" y="216.9" width="1" height="1" fill="#4a4a4a"/><rect x="5.8" y="222.8" width="1" height="1" fill="#4a4a4a"/><rect x="5.8" y="226.5" width="1" height="1" fill="#4a4a4a"/><rect x="5.8" y="232.4" width="1" height="1" fill="#4a4a4a"/><rect x="5.8" y="236.1" width="1" height="1" fill="#4a4a4a"/><rect x="5.8" y="242.0" width="1" height="1" fill="#4a4a4a"/><rect x="5.8" y="245.7" width="1" height="1" fill="#4a4a4a"/><rect x="5.8" y="251.6" width="1" height="1" fill="#4a4a4a"/><rect x="5.8" y="255.3" width="1" height="1" fill="#4a4a4a"/><rect x="5.8" y="261.2" width="1" height="1" fill="#4a4a4a"/><rect x="5.8" y="264.9" width="1" height="1" fill="#4a4a4a"/><rect x="5.8" y="270.8" width="1" height="1" fill="#4a4a4a"/><rect x="5.8" y="274.5" width="1" height="1" fill="#4a4a4a"/><rect x="5.8" y="280.4" width="1" height="1" fill="#4a4a4a"/><rect x="5.8" y="284.1" width="1" height="1" fill="#4a4a4a"/><rect x="5.8" y="290.0" width="1" height="1" fill="#4a4a4a"/><rect x="5.8" y="293.7" width="1" height="1" fill="#4a4a4a"/><rect x="2.5" y="77.5" width="4" height="1" fill="#161616"/><rect x="2.5" y="111.5" width="4" height="1" fill="#161616"/><rect x="2.5" y="143" width="4" height="1" fill="#161616"/><rect x="2.5" y="300" width="4" height="1" fill="#161616"/></svg>
<div style="left:951px;top:96px;width:12px;height:442px;background:#232323;"></div>
<div style="left:249px;top:411.3px;width:702px;height:1.2px;background:#161616;"></div>
<div style="left:249px;top:412.5px;width:702px;height:115.5px;background:#262626;"></div>
<svg style="left:252px;top:418px;" width="6" height="6" viewBox="0 0 6 6"><path d="M1.3 1.3 L4.7 4.7 M4.7 1.3 L1.3 4.7" stroke="#7a7a7a" stroke-width="0.8"/></svg>
<div style="left:261px;top:417.3px;width:6.2px;height:6.5px;background:#c7ab82;"></div>
<div class="t" style="left:273px;top:418px;font-size:7px;color:#c9c9c9;">One Node</div>
<svg style="left:305px;top:418px;" width="7" height="7" viewBox="0 0 7 7"><g fill="#6e6e6e"><rect x="0.5" y="0.8" width="5.5" height="1"/><rect x="0.5" y="3" width="5.5" height="1"/><rect x="0.5" y="5.2" width="5.5" height="1"/></g></svg>
<div class="t" style="left:253.5px;top:430px;font-size:9.6px;color:#2f8fee;font-weight:bold;-webkit-text-stroke:0;transform:scaleX(0.873)">0:00:04:16</div>
<div class="t" style="left:252.5px;top:441px;font-size:6.5px;color:#2a78c8;letter-spacing:0.1px;transform:scaleX(0.845)">00112 (24.00 fps)</div>
<div style="left:304px;top:434px;width:289px;height:9px;background:#171717;"></div>
<svg style="left:306px;top:434.5px;" width="12" height="9" viewBox="0 0 12 9"><circle cx="6" cy="3.5" r="2.6" fill="none" stroke="#c4c4c4" stroke-width="0.9"/><path d="M4.2 5.4 L1.2 8.4" stroke="#c4c4c4" stroke-width="1.1"/><path d="M8.6 6.4 L11 6.4 L9.8 7.8Z" fill="#c4c4c4"/></svg>
<svg style="left:601px;top:434px;" width="12" height="10" viewBox="0 0 12 10"><path d="M1 2.5 L5 2.5 M5 2.5 L7 5 L10 5 M7 5 L7 7.5 L10 7.5" stroke="#cfcfcf" stroke-width="0.9" fill="none"/><path d="M0.5 1.3 L2.5 2.5 L0.5 3.7Z" fill="#cfcfcf"/><path d="M9 8.5 L11 8.5 L10 9.8Z" fill="#cfcfcf"/></svg>
<svg style="left:619px;top:433px;" width="13" height="11" viewBox="0 0 13 11"><circle cx="2.8" cy="2.4" r="1.8" fill="#d6d6d6"/><path d="M7.5 4 L11 5.8 L11 9.5 L7.5 11 L4 9.5 L4 5.8Z" fill="none" stroke="#c4c4c4" stroke-width="0.9"/><path d="M4 5.8 L7.5 7.6 L11 5.8 M7.5 7.6 L7.5 11" stroke="#c4c4c4" stroke-width="0.8" fill="none"/></svg>
<svg style="left:639px;top:434px;" width="12" height="10" viewBox="0 0 12 10"><path d="M1 5.5 L11 5.5 L11 9 L1 9Z" fill="#bdbdbd"/><path d="M3 2 L6 0.5 L9 2 L9 5.5 L3 5.5Z" fill="#cfcfcf"/><rect x="5.5" y="2.5" width="1" height="5" fill="#262626"/></svg>
<svg style="left:655px;top:433.5px;" width="10" height="10" viewBox="0 0 10 10"><rect x="3" y="0.5" width="6.5" height="6.5" fill="#bdbdbd"/><rect x="0.5" y="3" width="6.5" height="6.5" fill="#cfcfcf" stroke="#232323" stroke-width="0.6"/><rect x="2" y="5.5" width="3.5" height="1" fill="#5a5a5a"/></svg>
<svg style="left:669.5px;top:433.5px;" width="10" height="10" viewBox="0 0 10 10"><path d="M2 8 L8 2" stroke="#cfcfcf" stroke-width="4.5" stroke-linecap="round"/><path d="M2 8 L8 2" stroke="#232323" stroke-width="2.6" stroke-linecap="round"/><circle cx="4" cy="6" r="0.6" fill="#cfcfcf"/><circle cx="6" cy="4" r="0.6" fill="#cfcfcf"/></svg>
<svg style="left:689px;top:433.5px;" width="11" height="10" viewBox="0 0 11 10"><rect x="0.8" y="1.5" width="9.4" height="8" fill="none" stroke="#c4c4c4" stroke-width="1"/><path d="M2.5 3.5 L5 3.5 L7 6.5 L9 6.5" stroke="#c4c4c4" stroke-width="0.9" fill="none"/><rect x="2" y="0.5" width="1" height="2" fill="#c4c4c4"/><rect x="8" y="0.5" width="1" height="2" fill="#c4c4c4"/></svg>
<div style="left:249px;top:448.3px;width:458px;height:1.2px;background:#1c1c1c;"></div>
<div style="left:249px;top:449.5px;width:458px;height:9px;background:#323232;"></div>
<div style="left:249px;top:458.5px;width:458px;height:1px;background:#1a1a1a;"></div>
<svg style="left:249.5px;top:450.5px;" width="36" height="8" viewBox="0 0 36 8"><path d="M0.8 3.6 Q4 0 7.2 3.6 Q4 7.2 0.8 3.6Z" fill="#cfcfcf"/><circle cx="4" cy="3.6" r="1.1" fill="#282828"/><path d="M9 2.4 L10.8 2.4 L13 0.8 L13 6.4 L10.8 4.8 L9 4.8Z" fill="#cfcfcf"/><path d="M14 1.5 Q15.5 3.6 14 5.7" stroke="#a0a0a0" stroke-width="0.7" fill="none"/><circle cx="20" cy="3.6" r="1.7" fill="#cfcfcf"/><rect x="26.5" y="3" width="5" height="4" fill="#cfcfcf"/><path d="M27.5 3 L27.5 1.8 Q29 0 30.5 1.8 L30.5 3" stroke="#cfcfcf" stroke-width="0.9" fill="none"/><rect x="28.6" y="4.2" width="0.9" height="1.6" fill="#282828"/></svg>
<div style="left:284.5px;top:451px;width:0.8px;height:6.5px;background:#1c1c1c;"></div>
<svg style="left:292px;top:450px;" width="9" height="9" viewBox="0 0 9 9"><path d="M0.6 1.2 L0.6 4 L4.6 7.6 L7.8 4.4 L4.2 0.8 L1 0.8Z" fill="#c4c4c4"/><circle cx="2.3" cy="2.5" r="0.8" fill="#282828"/></svg>
<div style="left:303px;top:451px;width:0.8px;height:6.5px;background:#1c1c1c;"></div>
<div class="t" style="left:307.5px;top:451px;font-size:6px;color:#8e8e8e;">#</div>
<div style="left:320.5px;top:451px;width:0.8px;height:6.5px;background:#1c1c1c;"></div>
<div class="t" style="left:325px;top:451px;font-size:6.2px;color:#8e8e8e;">Layer Name</div>
<div style="left:520px;top:451px;width:0.8px;height:6.5px;background:#1c1c1c;"></div>
<svg style="left:522px;top:450.5px;" width="68" height="8" viewBox="0 0 68 8"><g fill="#cfcfcf"><path d="M1 7 L1 4 Q1 0.8 4 0.8 Q7 0.8 7 4 L7 7 L6 7 L6 5 L5 7 L3 7 L2 5 L2 7Z"/></g><rect x="2.4" y="3" width="1" height="1" fill="#282828"/><rect x="4.6" y="3" width="1" height="1" fill="#282828"/><path d="M13.2 1 L13.8 3 L15.8 3.6 L13.8 4.2 L13.2 6.4 L12.6 4.2 L10.6 3.6 L12.6 3Z" fill="none" stroke="#cfcfcf" stroke-width="0.8"/><path d="M18.5 1 L24 6.8" stroke="#cfcfcf" stroke-width="0.9"/><text x="25.5" y="6.8" font-size="8" font-style="italic" fill="#bdbdbd" font-family="Liberation Serif">fx</text><rect x="34" y="0.6" width="8" height="6.8" fill="#a8a8a8"/><rect x="36" y="2.6" width="4" height="1.4" fill="#e0e0e0"/><path d="M44.5 6 L49 1.6" stroke="#bdbdbd" stroke-width="3.5" stroke-linecap="round"/><path d="M44.5 6 L49 1.6" stroke="#282828" stroke-width="2" stroke-linecap="round"/><circle cx="55" cy="3.8" r="3" fill="#cfcfcf"/><path d="M53 5.8 L57 1.8 L57 5.8Z" fill="#282828"/><path d="M63.5 0.6 L67 2.4 L67 5.6 L63.5 7.4 L60 5.6 L60 2.4Z" fill="none" stroke="#cfcfcf" stroke-width="0.8"/><path d="M60 2.4 L63.5 4.2 L67 2.4 M63.5 4.2 L63.5 7.4" stroke="#cfcfcf" stroke-width="0.7" fill="none"/></svg>
<div style="left:597px;top:451px;width:0.8px;height:6.5px;background:#1c1c1c;"></div>
<div class="t" style="left:601px;top:451px;font-size:6.2px;color:#8e8e8e;">Parent &amp; Link</div>
<div style="left:664.5px;top:451px;width:0.8px;height:6.5px;background:#1c1c1c;"></div>
<div class="t" style="left:667px;top:451px;font-size:6.2px;color:#8e8e8e;">Stretch</div>
<div style="left:698px;top:451px;width:0.8px;height:6.5px;background:#1c1c1c;"></div>
<div style="left:707px;top:429px;width:244px;height:98px;background:#232323;"></div>
<div style="left:707px;top:430.5px;width:244px;height:7px;background:#1a1a1a;"></div>
<div style="left:710px;top:432px;width:241px;height:5px;background:#6a6a6a;"></div>
<svg style="left:707.8px;top:431.8px;" width="5" height="6" viewBox="0 0 5 6"><path d="M4.2 0.2 L3 0.2 Q0.2 0.2 0.2 2.6 Q0.2 5 3 5 L4.2 5Z" fill="#2f8fee"/></svg>
<div style="left:859.3px;top:431.5px;width:1px;height:6px;background:#5aa0ea;"></div>
<svg style="left:707px;top:429px;" width="244" height="22" viewBox="0 0 244 22"><text x="1.3" y="15.3" font-size="6.8" fill="#c4c4c4" font-family="Liberation Sans" textLength="11" lengthAdjust="spacingAndGlyphs">0:00s</text><rect x="5.00" y="17.2" width="0.9" height="2.2" fill="#9a9a9a"/><text x="32.40" y="15.3" font-size="6.8" fill="#c4c4c4" font-family="Liberation Sans" textLength="9" lengthAdjust="spacingAndGlyphs">01s</text><rect x="36.50" y="17.2" width="0.9" height="2.2" fill="#9a9a9a"/><text x="63.90" y="15.3" font-size="6.8" fill="#c4c4c4" font-family="Liberation Sans" textLength="9" lengthAdjust="spacingAndGlyphs">02s</text><rect x="68.00" y="17.2" width="0.9" height="2.2" fill="#9a9a9a"/><text x="95.40" y="15.3" font-size="6.8" fill="#c4c4c4" font-family="Liberation Sans" textLength="9" lengthAdjust="spacingAndGlyphs">03s</text><rect x="99.50" y="17.2" width="0.9" height="2.2" fill="#9a9a9a"/><text x="126.90" y="15.3" font-size="6.8" fill="#c4c4c4" font-family="Liberation Sans" textLength="9" lengthAdjust="spacingAndGlyphs">04s</text><rect x="131.00" y="17.2" width="0.9" height="2.2" fill="#9a9a9a"/><text x="158.40" y="15.3" font-size="6.8" fill="#c4c4c4" font-family="Liberation Sans" textLength="9" lengthAdjust="spacingAndGlyphs">05s</text><rect x="162.50" y="17.2" width="0.9" height="2.2" fill="#9a9a9a"/><text x="189.90" y="15.3" font-size="6.8" fill="#c4c4c4" font-family="Liberation Sans" textLength="9" lengthAdjust="spacingAndGlyphs">06s</text><rect x="194.00" y="16.5" width="0.9" height="6" fill="#9a9a9a"/><text x="221.40" y="15.3" font-size="6.8" fill="#c4c4c4" font-family="Liberation Sans" textLength="9" lengthAdjust="spacingAndGlyphs">07s</text><rect x="225.50" y="16.5" width="0.9" height="6" fill="#9a9a9a"/></svg>
<div style="left:707px;top:448.5px;width:244px;height:9.5px;background:#262626;"></div>
<div style="left:710px;top:449px;width:176px;height:8px;background:#6a6a6a;"></div>
<svg style="left:708.5px;top:449px;" width="5" height="8.5" viewBox="0 0 5 8.5"><path d="M3.8 0.2 L2.2 0.2 Q0.3 0.2 0.3 2.2 L0.3 6 Q0.3 8 2.2 8 L3.8 8Z" fill="#2f8fee"/></svg>
<svg style="left:882.5px;top:449px;" width="5" height="8.5" viewBox="0 0 5 8.5"><path d="M0.2 0.2 L1.8 0.2 Q3.7 0.2 3.7 2.2 L3.7 6 Q3.7 8 1.8 8 L0.2 8Z" fill="#2f8fee"/></svg>
<div style="left:860px;top:457.8px;width:91px;height:1.5px;background:#1bd12a;"></div>
<div style="left:772.5px;top:458px;width:1.2px;height:1.2px;background:#1bd12a;"></div>
<div style="left:815.5px;top:458px;width:1.2px;height:1.2px;background:#1bd12a;"></div>
<div style="left:249px;top:459.6px;width:458px;height:8.82px;background:#393939;"></div>
<div style="left:249px;top:468.42px;width:458px;height:0.9px;background:#232323;"></div>
<div style="left:257.5px;top:459.6px;width:7.5px;height:8.82px;background:#3d3d3d;"></div>
<div style="left:266.5px;top:459.6px;width:7px;height:8.82px;background:#2e2e2e;"></div>
<div style="left:275px;top:459.6px;width:7px;height:8.82px;background:#2e2e2e;"></div>
<svg style="left:249.3px;top:460.6px;" width="8" height="8" viewBox="0 0 8 8"><path d="M0.4 3.6 Q3.8 -0.2 7.2 3.6 Q3.8 7.4 0.4 3.6Z" fill="#d6d6d6"/><circle cx="3.8" cy="3.6" r="1.2" fill="#222"/></svg>
<svg style="left:287px;top:461.6px;" width="7" height="5" viewBox="0 0 7 5"><path d="M1 1.2 L3.3 3.5 L5.6 1.2" stroke="#b8b8b8" stroke-width="0.9" fill="none"/></svg>
<div style="left:295.2px;top:460.6px;width:7px;height:6.8px;background:#efc3d6;"></div>
<div class="t" style="left:307.5px;top:461px;font-size:7.3px;color:#c4c4c4;">1</div>
<svg style="left:323px;top:460.6px;" width="10" height="7" viewBox="0 0 10 7"><rect x="0.5" y="1" width="5" height="5" fill="#d8d8d8"/><path d="M5.5 3 L8.8 1 L8.8 6 L5.5 4Z" fill="#d8d8d8"/><rect x="2" y="2.2" width="1" height="2.6" fill="#393939"/></svg>
<div style="left:333.5px;top:460.1px;width:186px;height:8.7px;background:#3b3b3b;box-sizing:border-box;border:1px solid #969696;"></div>
<div class="t" style="left:336px;top:461px;font-size:7px;color:#c4c4c4;">One Node Camera</div>
<svg style="left:522px;top:460.40000000000003px;" width="8" height="8" viewBox="0 0 8 8"><g fill="#cfcfcf"><path d="M1 7 L1 4 Q1 0.8 4 0.8 Q7 0.8 7 4 L7 7 L6 7 L6 5 L5 7 L3 7 L2 5 L2 7Z"/></g><rect x="2.4" y="3" width="1" height="1" fill="#393939"/><rect x="4.6" y="3" width="1" height="1" fill="#393939"/></svg>
<svg style="left:601.5px;top:460.20000000000005px;" width="9" height="9" viewBox="0 0 9 9"><path d="M4.5 4.2 Q5.6 4 5.4 3.2 Q5 2.2 3.9 2.5 Q2.6 3 2.9 4.6 Q3.4 6.3 5.3 6 Q7.3 5.4 7 3.3 Q6.4 1 4 1.2 Q1.2 1.6 1.3 4.5 Q1.6 7.6 4.8 7.5" stroke="#a8a8a8" stroke-width="0.8" fill="none"/></svg>
<div style="left:611.5px;top:460.1px;width:50px;height:7.92px;background:#1e1e1e;"></div>
<div class="t" style="left:615px;top:461px;font-size:7px;color:#c6c6c6;">None</div>
<svg style="left:653px;top:462.20000000000005px;" width="6" height="5" viewBox="0 0 6 5"><path d="M0.8 1 L3 3.2 L5.2 1" stroke="#bdbdbd" stroke-width="0.9" fill="none"/></svg>
<div style="left:662.5px;top:459.6px;width:44.5px;height:8.82px;background:#404040;"></div>
<div class="t" style="left:667px;top:461px;font-size:7px;color:#2f8fee;">100.0%</div>
<div style="left:707px;top:459.6px;width:1.8px;height:8.82px;background:#1a1a1a;"></div>
<div style="left:712px;top:459.6px;width:239px;height:8.82px;background:#d9a9bd;"></div>
<div style="left:860px;top:459.6px;width:91px;height:8.82px;background:#dcaec1;"></div>
<div style="left:249px;top:469.32000000000005px;width:458px;height:8.82px;background:#2b2b2b;"></div>
<div style="left:335px;top:469.32000000000005px;width:185px;height:8.82px;background:#3a3a3a;"></div>
<svg style="left:250px;top:470.82000000000005px;" width="24" height="7" viewBox="0 0 24 7"><path d="M3 0.8 L0.6 3.3 L3 5.8Z" fill="#c8c8c8"/><path d="M11 0.6 L13.6 3.3 L11 6 L8.4 3.3Z" fill="#2f8fee"/><path d="M18.5 0.8 L21 3.3 L18.5 5.8Z" fill="#5a5a5a"/></svg>
<svg style="left:314px;top:470.12000000000006px;" width="9" height="9" viewBox="0 0 9 9"><circle cx="4.5" cy="4.8" r="3.1" fill="none" stroke="#2f8fee" stroke-width="1"/><rect x="3.5" y="0.2" width="2" height="1" fill="#2f8fee"/><path d="M4.5 4.8 L6 3.3" stroke="#2f8fee" stroke-width="0.9"/></svg>
<svg style="left:324.5px;top:470.32000000000005px;" width="9" height="8" viewBox="0 0 9 8"><path d="M1 0.5 L1 7 L8 7" stroke="#c4c4c4" stroke-width="0.9" fill="none"/><path d="M2 2 L4 5 L6 3 L8 5" stroke="#c4c4c4" stroke-width="0.8" fill="none"/></svg>
<div class="t" style="left:337px;top:471px;font-size:7px;color:#b5b5b5;">Position</div>
<div class="t" style="left:523px;top:471px;font-size:7px;color:#2f8fee;transform:scaleX(0.878)">1155.0,480.0,-2401.7</div>
<svg style="left:607px;top:469.9200000000001px;" width="9" height="9" viewBox="0 0 9 9"><path d="M4.5 4.2 Q5.6 4 5.4 3.2 Q5 2.2 3.9 2.5 Q2.6 3 2.9 4.6 Q3.4 6.3 5.3 6 Q7.3 5.4 7 3.3 Q6.4 1 4 1.2 Q1.2 1.6 1.3 4.5 Q1.6 7.6 4.8 7.5" stroke="#c4c4c4" stroke-width="0.8" fill="none"/></svg>
<div style="left:707px;top:469.32000000000005px;width:244px;height:8.82px;background:#2b2b2b;"></div>
<div style="left:712px;top:469.32000000000005px;width:171px;height:8.82px;background:#333333;"></div>
<svg style="left:710px;top:471.12000000000006px;" width="6" height="6" viewBox="0 0 6 6"><path d="M0.5 0.5 L5.5 0.5 L3.8 3 L5.5 5.5 L0.5 5.5 L2.2 3Z" fill="#2f8fee"/></svg>
<svg style="left:857px;top:471.12000000000006px;" width="6" height="6" viewBox="0 0 6 6"><path d="M0.5 0.5 L5.5 0.5 L3.8 3 L5.5 5.5 L0.5 5.5 L2.2 3Z" fill="#2f8fee"/></svg>
<div style="left:249px;top:479.04px;width:458px;height:8.82px;background:#2b2b2b;"></div>
<div style="left:249px;top:487.86px;width:458px;height:0.9px;background:#232323;"></div>
<div style="left:257.5px;top:479.04px;width:7.5px;height:8.82px;background:#2e2e2e;"></div>
<div style="left:266.5px;top:479.04px;width:7px;height:8.82px;background:#222222;"></div>
<div style="left:275px;top:479.04px;width:7px;height:8.82px;background:#222222;"></div>
<svg style="left:249.3px;top:480.04px;" width="8" height="8" viewBox="0 0 8 8"><path d="M0.4 3.6 Q3.8 -0.2 7.2 3.6 Q3.8 7.4 0.4 3.6Z" fill="#d6d6d6"/><circle cx="3.8" cy="3.6" r="1.2" fill="#222"/></svg>
<svg style="left:288px;top:480.54px;" width="5" height="7" viewBox="0 0 5 7"><path d="M1.2 1 L3.5 3.3 L1.2 5.6" stroke="#b8b8b8" stroke-width="0.9" fill="none"/></svg>
<div style="left:295.2px;top:480.04px;width:7px;height:6.8px;background:#f27ad6;"></div>
<div class="t" style="left:307.5px;top:481px;font-size:7.3px;color:#c4c4c4;">2</div>
<svg style="left:323.5px;top:479.34000000000003px;" width="8" height="9" viewBox="0 0 8 9"><rect x="0.5" y="0.5" width="7" height="8" rx="1" fill="#2a1a0e" stroke="#a8581a" stroke-width="0.8"/><path d="M2.2 4.6 Q2.2 1.8 4 1.8 Q5.8 1.8 5.8 4.6Z" fill="#e07a20"/><rect x="3.5" y="5" width="1" height="2.4" fill="#d8d8d8"/></svg>
<div class="t" style="left:335px;top:481px;font-size:7px;color:#bdbdbd;">Foreground Flowers</div>
<svg style="left:522px;top:479.84000000000003px;" width="26" height="8" viewBox="0 0 26 8"><g fill="#cfcfcf"><path d="M1 7 L1 4 Q1 0.8 4 0.8 Q7 0.8 7 4 L7 7 L6 7 L6 5 L5 7 L3 7 L2 5 L2 7Z"/></g><rect x="2.4" y="3" width="1" height="1" fill="#2b2b2b"/><rect x="4.6" y="3" width="1" height="1" fill="#2b2b2b"/><path d="M13.2 1 L13.8 3 L15.8 3.6 L13.8 4.2 L13.2 6.4 L12.6 4.2 L10.6 3.6 L12.6 3Z" fill="none" stroke="#cfcfcf" stroke-width="0.8"/><path d="M18.5 7 L24 1.2" stroke="#cfcfcf" stroke-width="0.9"/></svg>
<div style="left:547.5px;top:479.04px;width:17px;height:8.82px;background:#2e2e2e;"></div>
<div style="left:565px;top:479.04px;width:7px;height:8.82px;background:#252525;"></div>
<div style="left:574.5px;top:479.04px;width:7px;height:8.82px;background:#252525;"></div>
<svg style="left:582px;top:479.84000000000003px;" width="9" height="8" viewBox="0 0 9 8"><path d="M4.5 0.6 L8 2.4 L8 5.6 L4.5 7.4 L1 5.6 L1 2.4Z" fill="none" stroke="#cfcfcf" stroke-width="0.8"/><path d="M1 2.4 L4.5 4.2 L8 2.4 M4.5 4.2 L4.5 7.4" stroke="#cfcfcf" stroke-width="0.7" fill="none"/></svg>
<svg style="left:601.5px;top:479.64000000000004px;" width="9" height="9" viewBox="0 0 9 9"><path d="M4.5 4.2 Q5.6 4 5.4 3.2 Q5 2.2 3.9 2.5 Q2.6 3 2.9 4.6 Q3.4 6.3 5.3 6 Q7.3 5.4 7 3.3 Q6.4 1 4 1.2 Q1.2 1.6 1.3 4.5 Q1.6 7.6 4.8 7.5" stroke="#a8a8a8" stroke-width="0.8" fill="none"/></svg>
<div style="left:611.5px;top:479.54px;width:50px;height:7.92px;background:#1e1e1e;"></div>
<div class="t" style="left:615px;top:481px;font-size:7px;color:#c6c6c6;">None</div>
<svg style="left:653px;top:481.64000000000004px;" width="6" height="5" viewBox="0 0 6 5"><path d="M0.8 1 L3 3.2 L5.2 1" stroke="#bdbdbd" stroke-width="0.9" fill="none"/></svg>
<div class="t" style="left:667px;top:481px;font-size:7px;color:#2f8fee;">100.0%</div>
<div style="left:707px;top:479.04px;width:1.8px;height:8.82px;background:#1a1a1a;"></div>
<div style="left:249px;top:488.76000000000005px;width:458px;height:8.82px;background:#2b2b2b;"></div>
<div style="left:249px;top:497.58000000000004px;width:458px;height:0.9px;background:#232323;"></div>
<div style="left:257.5px;top:488.76000000000005px;width:7.5px;height:8.82px;background:#2e2e2e;"></div>
<div style="left:266.5px;top:488.76000000000005px;width:7px;height:8.82px;background:#222222;"></div>
<div style="left:275px;top:488.76000000000005px;width:7px;height:8.82px;background:#222222;"></div>
<svg style="left:249.3px;top:489.76000000000005px;" width="8" height="8" viewBox="0 0 8 8"><path d="M0.4 3.6 Q3.8 -0.2 7.2 3.6 Q3.8 7.4 0.4 3.6Z" fill="#d6d6d6"/><circle cx="3.8" cy="3.6" r="1.2" fill="#222"/></svg>
<svg style="left:288px;top:490.26000000000005px;" width="5" height="7" viewBox="0 0 5 7"><path d="M1.2 1 L3.5 3.3 L1.2 5.6" stroke="#b8b8b8" stroke-width="0.9" fill="none"/></svg>
<div style="left:295.2px;top:489.76000000000005px;width:7px;height:6.8px;background:#f27ad6;"></div>
<div class="t" style="left:307.5px;top:490px;font-size:7.3px;color:#c4c4c4;">3</div>
<svg style="left:323.5px;top:489.06000000000006px;" width="8" height="9" viewBox="0 0 8 9"><rect x="0.5" y="0.5" width="7" height="8" rx="1" fill="#2a1a0e" stroke="#a8581a" stroke-width="0.8"/><path d="M2.2 4.6 Q2.2 1.8 4 1.8 Q5.8 1.8 5.8 4.6Z" fill="#e07a20"/><rect x="3.5" y="5" width="1" height="2.4" fill="#d8d8d8"/></svg>
<div class="t" style="left:335px;top:491px;font-size:7px;color:#bdbdbd;">Background Flowers</div>
<svg style="left:522px;top:489.56000000000006px;" width="26" height="8" viewBox="0 0 26 8"><g fill="#cfcfcf"><path d="M1 7 L1 4 Q1 0.8 4 0.8 Q7 0.8 7 4 L7 7 L6 7 L6 5 L5 7 L3 7 L2 5 L2 7Z"/></g><rect x="2.4" y="3" width="1" height="1" fill="#2b2b2b"/><rect x="4.6" y="3" width="1" height="1" fill="#2b2b2b"/><path d="M13.2 1 L13.8 3 L15.8 3.6 L13.8 4.2 L13.2 6.4 L12.6 4.2 L10.6 3.6 L12.6 3Z" fill="none" stroke="#cfcfcf" stroke-width="0.8"/><path d="M18.5 7 L24 1.2" stroke="#cfcfcf" stroke-width="0.9"/></svg>
<div style="left:547.5px;top:488.76000000000005px;width:17px;height:8.82px;background:#2e2e2e;"></div>
<div style="left:565px;top:488.76000000000005px;width:7px;height:8.82px;background:#252525;"></div>
<div style="left:574.5px;top:488.76000000000005px;width:7px;height:8.82px;background:#252525;"></div>
<svg style="left:582px;top:489.56000000000006px;" width="9" height="8" viewBox="0 0 9 8"><path d="M4.5 0.6 L8 2.4 L8 5.6 L4.5 7.4 L1 5.6 L1 2.4Z" fill="none" stroke="#cfcfcf" stroke-width="0.8"/><path d="M1 2.4 L4.5 4.2 L8 2.4 M4.5 4.2 L4.5 7.4" stroke="#cfcfcf" stroke-width="0.7" fill="none"/></svg>
<svg style="left:601.5px;top:489.36000000000007px;" width="9" height="9" viewBox="0 0 9 9"><path d="M4.5 4.2 Q5.6 4 5.4 3.2 Q5 2.2 3.9 2.5 Q2.6 3 2.9 4.6 Q3.4 6.3 5.3 6 Q7.3 5.4 7 3.3 Q6.4 1 4 1.2 Q1.2 1.6 1.3 4.5 Q1.6 7.6 4.8 7.5" stroke="#a8a8a8" stroke-width="0.8" fill="none"/></svg>
<div style="left:611.5px;top:489.26000000000005px;width:50px;height:7.92px;background:#1e1e1e;"></div>
<div class="t" style="left:615px;top:491px;font-size:7px;color:#c6c6c6;">None</div>
<svg style="left:653px;top:491.36000000000007px;" width="6" height="5" viewBox="0 0 6 5"><path d="M0.8 1 L3 3.2 L5.2 1" stroke="#bdbdbd" stroke-width="0.9" fill="none"/></svg>
<div class="t" style="left:667px;top:491px;font-size:7px;color:#2f8fee;">100.0%</div>
<div style="left:707px;top:488.76000000000005px;width:1.8px;height:8.82px;background:#1a1a1a;"></div>
<div style="left:249px;top:498.48px;width:458px;height:8.82px;background:#2b2b2b;"></div>
<div style="left:249px;top:507.3px;width:458px;height:0.9px;background:#232323;"></div>
<div style="left:257.5px;top:498.48px;width:7.5px;height:8.82px;background:#2e2e2e;"></div>
<div style="left:266.5px;top:498.48px;width:7px;height:8.82px;background:#222222;"></div>
<div style="left:275px;top:498.48px;width:7px;height:8.82px;background:#222222;"></div>
<svg style="left:249.3px;top:499.48px;" width="8" height="8" viewBox="0 0 8 8"><path d="M0.4 3.6 Q3.8 -0.2 7.2 3.6 Q3.8 7.4 0.4 3.6Z" fill="#d6d6d6"/><circle cx="3.8" cy="3.6" r="1.2" fill="#222"/></svg>
<svg style="left:288px;top:499.98px;" width="5" height="7" viewBox="0 0 5 7"><path d="M1.2 1 L3.5 3.3 L1.2 5.6" stroke="#b8b8b8" stroke-width="0.9" fill="none"/></svg>
<div style="left:295.2px;top:499.48px;width:7px;height:6.8px;background:#1e4a22;"></div>
<div class="t" style="left:307.5px;top:500px;font-size:7.3px;color:#c4c4c4;">4</div>
<svg style="left:323.5px;top:498.78000000000003px;" width="8" height="9" viewBox="0 0 8 9"><rect x="0.5" y="0.5" width="7" height="8" rx="1" fill="#2a1a0e" stroke="#a8581a" stroke-width="0.8"/><path d="M2.2 4.6 Q2.2 1.8 4 1.8 Q5.8 1.8 5.8 4.6Z" fill="#e07a20"/><rect x="3.5" y="5" width="1" height="2.4" fill="#d8d8d8"/></svg>
<div class="t" style="left:335px;top:500px;font-size:7px;color:#bdbdbd;">Foreground Hills</div>
<svg style="left:522px;top:499.28000000000003px;" width="26" height="8" viewBox="0 0 26 8"><g fill="#cfcfcf"><path d="M1 7 L1 4 Q1 0.8 4 0.8 Q7 0.8 7 4 L7 7 L6 7 L6 5 L5 7 L3 7 L2 5 L2 7Z"/></g><rect x="2.4" y="3" width="1" height="1" fill="#2b2b2b"/><rect x="4.6" y="3" width="1" height="1" fill="#2b2b2b"/><path d="M13.2 1 L13.8 3 L15.8 3.6 L13.8 4.2 L13.2 6.4 L12.6 4.2 L10.6 3.6 L12.6 3Z" fill="none" stroke="#cfcfcf" stroke-width="0.8"/><path d="M18.5 7 L24 1.2" stroke="#cfcfcf" stroke-width="0.9"/></svg>
<div style="left:547.5px;top:498.48px;width:17px;height:8.82px;background:#2e2e2e;"></div>
<div style="left:565px;top:498.48px;width:7px;height:8.82px;background:#252525;"></div>
<div style="left:574.5px;top:498.48px;width:7px;height:8.82px;background:#252525;"></div>
<svg style="left:582px;top:499.28000000000003px;" width="9" height="8" viewBox="0 0 9 8"><path d="M4.5 0.6 L8 2.4 L8 5.6 L4.5 7.4 L1 5.6 L1 2.4Z" fill="none" stroke="#cfcfcf" stroke-width="0.8"/><path d="M1 2.4 L4.5 4.2 L8 2.4 M4.5 4.2 L4.5 7.4" stroke="#cfcfcf" stroke-width="0.7" fill="none"/></svg>
<svg style="left:601.5px;top:499.08000000000004px;" width="9" height="9" viewBox="0 0 9 9"><path d="M4.5 4.2 Q5.6 4 5.4 3.2 Q5 2.2 3.9 2.5 Q2.6 3 2.9 4.6 Q3.4 6.3 5.3 6 Q7.3 5.4 7 3.3 Q6.4 1 4 1.2 Q1.2 1.6 1.3 4.5 Q1.6 7.6 4.8 7.5" stroke="#a8a8a8" stroke-width="0.8" fill="none"/></svg>
<div style="left:611.5px;top:498.98px;width:50px;height:7.92px;background:#1e1e1e;"></div>
<div class="t" style="left:615px;top:500px;font-size:7px;color:#c6c6c6;">None</div>
<svg style="left:653px;top:501.08000000000004px;" width="6" height="5" viewBox="0 0 6 5"><path d="M0.8 1 L3 3.2 L5.2 1" stroke="#bdbdbd" stroke-width="0.9" fill="none"/></svg>
<div class="t" style="left:667px;top:500px;font-size:7px;color:#2f8fee;">100.0%</div>
<div style="left:707px;top:498.48px;width:1.8px;height:8.82px;background:#1a1a1a;"></div>
<div style="left:249px;top:508.20000000000005px;width:458px;height:8.82px;background:#2b2b2b;"></div>
<div style="left:249px;top:517.0200000000001px;width:458px;height:0.9px;background:#232323;"></div>
<div style="left:257.5px;top:508.20000000000005px;width:7.5px;height:8.82px;background:#2e2e2e;"></div>
<div style="left:266.5px;top:508.20000000000005px;width:7px;height:8.82px;background:#222222;"></div>
<div style="left:275px;top:508.20000000000005px;width:7px;height:8.82px;background:#222222;"></div>
<svg style="left:249.3px;top:509.20000000000005px;" width="8" height="8" viewBox="0 0 8 8"><path d="M0.4 3.6 Q3.8 -0.2 7.2 3.6 Q3.8 7.4 0.4 3.6Z" fill="#d6d6d6"/><circle cx="3.8" cy="3.6" r="1.2" fill="#222"/></svg>
<svg style="left:288px;top:509.70000000000005px;" width="5" height="7" viewBox="0 0 5 7"><path d="M1.2 1 L3.5 3.3 L1.2 5.6" stroke="#b8b8b8" stroke-width="0.9" fill="none"/></svg>
<div style="left:295.2px;top:509.20000000000005px;width:7px;height:6.8px;background:#b9b6e2;"></div>
<div class="t" style="left:307.5px;top:510px;font-size:7.3px;color:#c4c4c4;">5</div>
<svg style="left:323.5px;top:508.50000000000006px;" width="8" height="9" viewBox="0 0 8 9"><rect x="0.5" y="0.5" width="7" height="8" rx="1" fill="#2a1a0e" stroke="#a8581a" stroke-width="0.8"/><path d="M2.2 4.6 Q2.2 1.8 4 1.8 Q5.8 1.8 5.8 4.6Z" fill="#e07a20"/><rect x="3.5" y="5" width="1" height="2.4" fill="#d8d8d8"/></svg>
<div class="t" style="left:335px;top:510px;font-size:7px;color:#bdbdbd;">Hippies</div>
<svg style="left:522px;top:509.00000000000006px;" width="26" height="8" viewBox="0 0 26 8"><g fill="#cfcfcf"><path d="M1 7 L1 4 Q1 0.8 4 0.8 Q7 0.8 7 4 L7 7 L6 7 L6 5 L5 7 L3 7 L2 5 L2 7Z"/></g><rect x="2.4" y="3" width="1" height="1" fill="#2b2b2b"/><rect x="4.6" y="3" width="1" height="1" fill="#2b2b2b"/><path d="M13.2 1 L13.8 3 L15.8 3.6 L13.8 4.2 L13.2 6.4 L12.6 4.2 L10.6 3.6 L12.6 3Z" fill="none" stroke="#cfcfcf" stroke-width="0.8"/><path d="M18.5 7 L24 1.2" stroke="#cfcfcf" stroke-width="0.9"/></svg>
<div style="left:547.5px;top:508.20000000000005px;width:17px;height:8.82px;background:#2e2e2e;"></div>
<div style="left:565px;top:508.20000000000005px;width:7px;height:8.82px;background:#252525;"></div>
<div style="left:574.5px;top:508.20000000000005px;width:7px;height:8.82px;background:#252525;"></div>
<svg style="left:582px;top:509.00000000000006px;" width="9" height="8" viewBox="0 0 9 8"><path d="M4.5 0.6 L8 2.4 L8 5.6 L4.5 7.4 L1 5.6 L1 2.4Z" fill="none" stroke="#cfcfcf" stroke-width="0.8"/><path d="M1 2.4 L4.5 4.2 L8 2.4 M4.5 4.2 L4.5 7.4" stroke="#cfcfcf" stroke-width="0.7" fill="none"/></svg>
<svg style="left:601.5px;top:508.80000000000007px;" width="9" height="9" viewBox="0 0 9 9"><path d="M4.5 4.2 Q5.6 4 5.4 3.2 Q5 2.2 3.9 2.5 Q2.6 3 2.9 4.6 Q3.4 6.3 5.3 6 Q7.3 5.4 7 3.3 Q6.4 1 4 1.2 Q1.2 1.6 1.3 4.5 Q1.6 7.6 4.8 7.5" stroke="#a8a8a8" stroke-width="0.8" fill="none"/></svg>
<div style="left:611.5px;top:508.70000000000005px;width:50px;height:7.92px;background:#1e1e1e;"></div>
<div class="t" style="left:615px;top:510px;font-size:7px;color:#c6c6c6;">None</div>
<svg style="left:653px;top:510.80000000000007px;" width="6" height="5" viewBox="0 0 6 5"><path d="M0.8 1 L3 3.2 L5.2 1" stroke="#bdbdbd" stroke-width="0.9" fill="none"/></svg>
<div class="t" style="left:667px;top:510px;font-size:7px;color:#2f8fee;">100.0%</div>
<div style="left:707px;top:508.20000000000005px;width:1.8px;height:8.82px;background:#1a1a1a;"></div>
<div style="left:249px;top:517.9200000000001px;width:458px;height:8.82px;background:#2b2b2b;"></div>
<div style="left:249px;top:526.7400000000001px;width:458px;height:0.9px;background:#232323;"></div>
<div style="left:257.5px;top:517.9200000000001px;width:7.5px;height:8.82px;background:#2e2e2e;"></div>
<div style="left:266.5px;top:517.9200000000001px;width:7px;height:8.82px;background:#222222;"></div>
<div style="left:275px;top:517.9200000000001px;width:7px;height:8.82px;background:#222222;"></div>
<svg style="left:249.3px;top:518.9200000000001px;" width="8" height="8" viewBox="0 0 8 8"><path d="M0.4 3.6 Q3.8 -0.2 7.2 3.6 Q3.8 7.4 0.4 3.6Z" fill="#d6d6d6"/><circle cx="3.8" cy="3.6" r="1.2" fill="#222"/></svg>
<svg style="left:288px;top:519.4200000000001px;" width="5" height="7" viewBox="0 0 5 7"><path d="M1.2 1 L3.5 3.3 L1.2 5.6" stroke="#b8b8b8" stroke-width="0.9" fill="none"/></svg>
<div style="left:295.2px;top:518.9200000000001px;width:7px;height:6.8px;background:#45a852;"></div>
<div class="t" style="left:307.5px;top:520px;font-size:7.3px;color:#c4c4c4;">6</div>
<svg style="left:323.5px;top:518.22px;" width="8" height="9" viewBox="0 0 8 9"><rect x="0.5" y="0.5" width="7" height="8" rx="1" fill="#2a1a0e" stroke="#a8581a" stroke-width="0.8"/><path d="M2.2 4.6 Q2.2 1.8 4 1.8 Q5.8 1.8 5.8 4.6Z" fill="#e07a20"/><rect x="3.5" y="5" width="1" height="2.4" fill="#d8d8d8"/></svg>
<div class="t" style="left:335px;top:520px;font-size:7px;color:#bdbdbd;">Midground Hills</div>
<svg style="left:522px;top:518.72px;" width="26" height="8" viewBox="0 0 26 8"><g fill="#cfcfcf"><path d="M1 7 L1 4 Q1 0.8 4 0.8 Q7 0.8 7 4 L7 7 L6 7 L6 5 L5 7 L3 7 L2 5 L2 7Z"/></g><rect x="2.4" y="3" width="1" height="1" fill="#2b2b2b"/><rect x="4.6" y="3" width="1" height="1" fill="#2b2b2b"/><path d="M13.2 1 L13.8 3 L15.8 3.6 L13.8 4.2 L13.2 6.4 L12.6 4.2 L10.6 3.6 L12.6 3Z" fill="none" stroke="#cfcfcf" stroke-width="0.8"/><path d="M18.5 7 L24 1.2" stroke="#cfcfcf" stroke-width="0.9"/></svg>
<div style="left:547.5px;top:517.9200000000001px;width:17px;height:8.82px;background:#2e2e2e;"></div>
<div style="left:565px;top:517.9200000000001px;width:7px;height:8.82px;background:#252525;"></div>
<div style="left:574.5px;top:517.9200000000001px;width:7px;height:8.82px;background:#252525;"></div>
<svg style="left:582px;top:518.72px;" width="9" height="8" viewBox="0 0 9 8"><path d="M4.5 0.6 L8 2.4 L8 5.6 L4.5 7.4 L1 5.6 L1 2.4Z" fill="none" stroke="#cfcfcf" stroke-width="0.8"/><path d="M1 2.4 L4.5 4.2 L8 2.4 M4.5 4.2 L4.5 7.4" stroke="#cfcfcf" stroke-width="0.7" fill="none"/></svg>
<svg style="left:601.5px;top:518.5200000000001px;" width="9" height="9" viewBox="0 0 9 9"><path d="M4.5 4.2 Q5.6 4 5.4 3.2 Q5 2.2 3.9 2.5 Q2.6 3 2.9 4.6 Q3.4 6.3 5.3 6 Q7.3 5.4 7 3.3 Q6.4 1 4 1.2 Q1.2 1.6 1.3 4.5 Q1.6 7.6 4.8 7.5" stroke="#a8a8a8" stroke-width="0.8" fill="none"/></svg>
<div style="left:611.5px;top:518.4200000000001px;width:50px;height:7.92px;background:#1e1e1e;"></div>
<div class="t" style="left:615px;top:520px;font-size:7px;color:#c6c6c6;">None</div>
<svg style="left:653px;top:520.5200000000001px;" width="6" height="5" viewBox="0 0 6 5"><path d="M0.8 1 L3 3.2 L5.2 1" stroke="#bdbdbd" stroke-width="0.9" fill="none"/></svg>
<div class="t" style="left:667px;top:520px;font-size:7px;color:#2f8fee;">100.0%</div>
<div style="left:707px;top:517.9200000000001px;width:1.8px;height:8.82px;background:#1a1a1a;"></div>
<div style="left:712px;top:479.04px;width:239px;height:8.82px;background:#9a548f;"></div>
<div style="left:712px;top:488.76000000000005px;width:239px;height:8.82px;background:#9a548f;"></div>
<div style="left:712px;top:498.48px;width:239px;height:8.82px;background:#2b3f2b;"></div>
<div style="left:712px;top:508.20000000000005px;width:239px;height:8.82px;background:#777487;"></div>
<div style="left:712px;top:517.9200000000001px;width:239px;height:8.82px;background:#3f6e45;"></div>
<div style="left:883px;top:479.3px;width:68px;height:47px;background:rgba(0,0,0,0.06);"></div>
<svg style="left:713px;top:459.5px;" width="138" height="10" viewBox="0 0 138 10"><rect x="1.3" y="1.2" width="135.2" height="7.8" rx="0.6" fill="#f3e6ec" stroke="#9a8a90" stroke-width="0.6"/></svg>
<svg style="left:714px;top:460px;" width="137" height="9" viewBox="0 0 137 9"><text x="3.5" y="6.6" font-size="7" fill="#1e1a1c" font-family="Liberation Sans" textLength="127.5" lengthAdjust="spacingAndGlyphs">With single node, the camera points straight ahead</text></svg>
<svg style="left:709.5px;top:463px;" width="7" height="6" viewBox="0 0 7 6"><path d="M3.5 0.5 L6.5 5.5 L0.5 5.5Z" fill="#cfcfcf"/></svg>
<div style="left:859.3px;top:440px;width:0.9px;height:86.5px;background:#4a8fd6;"></div>
<svg style="left:855.8px;top:439.8px;" width="8" height="9" viewBox="0 0 8 9"><path d="M1.2 0.3 L6.8 0.3 Q7.6 0.3 7.6 1.2 L7.6 4.6 L4 8.4 L0.4 4.6 L0.4 1.2 Q0.4 0.3 1.2 0.3Z" fill="#2f8fee"/><path d="M2.8 2.4 L5.2 2.4 L4 4.6Z" fill="#1d5a9a"/></svg>
<div style="left:707px;top:526.5px;width:244px;height:11.5px;background:#232323;"></div>
<div style="left:249px;top:527px;width:458px;height:11px;background:#232323;"></div>
<svg style="left:953px;top:394px;" width="10" height="20" viewBox="0 0 10 20"><polygon points="0.5,9.5 10,0 10,19" fill="#fff"/></svg>
<svg style="left:237px;top:463.5px;" width="12" height="21" viewBox="0 0 12 21"><polygon points="0,1 9.8,10.5 0,20" fill="#fff" stroke="#1a1a1a" stroke-width="0.6"/></svg>
<svg style="left:576px;top:528px;" width="20" height="10" viewBox="0 0 20 10"><polygon points="10,0.5 19,10 1,10" fill="#fff"/></svg>
</body></html>
